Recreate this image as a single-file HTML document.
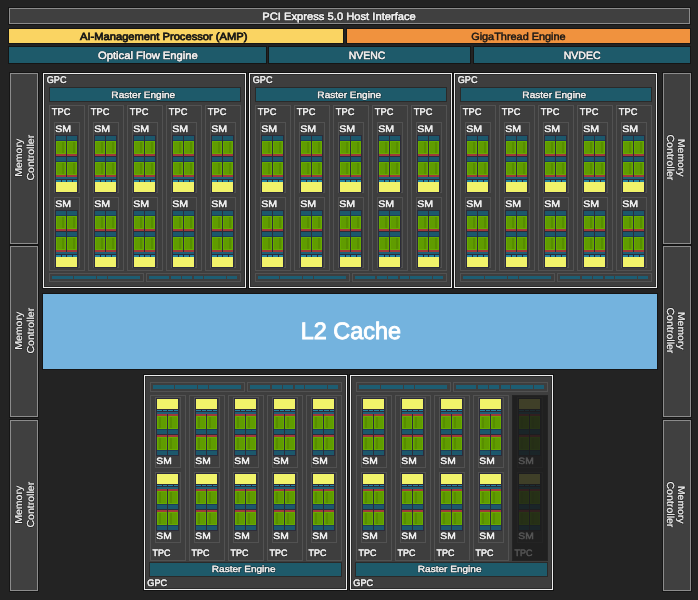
<!DOCTYPE html>
<html><head><meta charset="utf-8"><style>
html,body{margin:0;padding:0;}
body{width:698px;height:600px;background:#232323;position:relative;overflow:hidden;font-family:"Liberation Sans",sans-serif;}
body>div{position:absolute;}
svg{position:absolute;left:0;top:0;will-change:transform;}
text{font-family:"Liberation Sans",sans-serif;text-rendering:geometricPrecision;}
</style></head><body>
<div style="left:9px;top:8px;width:681px;height:16px;background:#404040;border:1px solid #8c8c8c;box-sizing:border-box;box-shadow:0 0 0 1px #151515;"></div>
<div style="left:9px;top:29px;width:334px;height:14px;background:#fad462;box-shadow:0 0 0 1px #151515;"></div>
<div style="left:347px;top:29px;width:343px;height:14px;background:#f0923e;box-shadow:0 0 0 1px #151515;"></div>
<div style="left:9px;top:47px;width:257px;height:16px;background:#1e5a6a;box-shadow:0 0 0 1px #151515;"></div>
<div style="left:269px;top:47px;width:201px;height:16px;background:#1e5a6a;box-shadow:0 0 0 1px #151515;"></div>
<div style="left:474px;top:47px;width:216px;height:16px;background:#1e5a6a;box-shadow:0 0 0 1px #151515;"></div>
<div style="left:10px;top:73px;width:28px;height:171px;background:#404040;border:1px solid #8c8c8c;box-sizing:border-box;box-shadow:0 0 0 1px #151515;"></div>
<div style="left:10px;top:246px;width:28px;height:171px;background:#404040;border:1px solid #8c8c8c;box-sizing:border-box;box-shadow:0 0 0 1px #151515;"></div>
<div style="left:10px;top:420px;width:28px;height:171px;background:#404040;border:1px solid #8c8c8c;box-sizing:border-box;box-shadow:0 0 0 1px #151515;"></div>
<div style="left:663px;top:73px;width:28px;height:171px;background:#404040;border:1px solid #8c8c8c;box-sizing:border-box;box-shadow:0 0 0 1px #151515;"></div>
<div style="left:663px;top:246px;width:28px;height:171px;background:#404040;border:1px solid #8c8c8c;box-sizing:border-box;box-shadow:0 0 0 1px #151515;"></div>
<div style="left:663px;top:420px;width:28px;height:171px;background:#404040;border:1px solid #8c8c8c;box-sizing:border-box;box-shadow:0 0 0 1px #151515;"></div>
<div style="left:43px;top:294px;width:614px;height:75px;background:#74b3de;box-shadow:0 0 0 1px #151515;"></div>
<div style="left:43px;top:73px;width:203px;height:215px;background:#3e3e3e;border:1px solid #ececec;box-sizing:border-box;box-shadow:0 0 0 1px #121212, inset 0 0 0 1px #2c2c2c;"></div>
<div style="left:50px;top:88px;width:190px;height:13px;background:#1e5a6a;box-shadow:0 0 0 1px #2a2a2a;"></div>
<div style="left:49px;top:105px;width:36px;height:166px;border:1px solid #525252;box-sizing:border-box;"></div>
<div style="left:54px;top:122px;width:26px;height:71px;border:1px solid #525252;box-sizing:border-box;"></div>
<div style="left:55px;top:135px;width:23px;height:58px;background:#2c2c3a;"></div>
<div style="left:56px;top:136px;width:10px;height:4px;background:#1c586c;"></div>
<div style="left:56px;top:140px;width:10px;height:1px;background:#1d3d5a;"></div>
<div style="left:56px;top:141px;width:10px;height:13px;background:#609c00;box-shadow:inset 0 0 0 1px #68aa00;"></div>
<div style="left:62px;top:142px;width:2px;height:11px;background:#588e00;"></div>
<div style="left:56px;top:154px;width:10px;height:2px;background:#a03a3a;"></div>
<div style="left:56px;top:157px;width:10px;height:4px;background:#1c586c;"></div>
<div style="left:56px;top:161px;width:10px;height:1px;background:#1d3d5a;"></div>
<div style="left:56px;top:162px;width:10px;height:13px;background:#609c00;box-shadow:inset 0 0 0 1px #68aa00;"></div>
<div style="left:62px;top:163px;width:2px;height:11px;background:#588e00;"></div>
<div style="left:56px;top:175px;width:10px;height:2px;background:#a03a3a;"></div>
<div style="left:67px;top:136px;width:10px;height:4px;background:#1c586c;"></div>
<div style="left:67px;top:140px;width:10px;height:1px;background:#1d3d5a;"></div>
<div style="left:67px;top:141px;width:10px;height:13px;background:#609c00;box-shadow:inset 0 0 0 1px #68aa00;"></div>
<div style="left:73px;top:142px;width:2px;height:11px;background:#588e00;"></div>
<div style="left:67px;top:154px;width:10px;height:2px;background:#a03a3a;"></div>
<div style="left:67px;top:157px;width:10px;height:4px;background:#1c586c;"></div>
<div style="left:67px;top:161px;width:10px;height:1px;background:#1d3d5a;"></div>
<div style="left:67px;top:162px;width:10px;height:13px;background:#609c00;box-shadow:inset 0 0 0 1px #68aa00;"></div>
<div style="left:73px;top:163px;width:2px;height:11px;background:#588e00;"></div>
<div style="left:67px;top:175px;width:10px;height:2px;background:#a03a3a;"></div>
<div style="left:56px;top:177px;width:21px;height:2px;background:#1f6076;"></div>
<div style="left:56px;top:180px;width:21px;height:1.5px;background:#2684a2;"></div>
<div style="left:61px;top:180px;width:1px;height:1.5px;background:#26263a;"></div>
<div style="left:66px;top:180px;width:1px;height:1.5px;background:#26263a;"></div>
<div style="left:72px;top:180px;width:1px;height:1.5px;background:#26263a;"></div>
<div style="left:56px;top:182px;width:21px;height:10px;background:#f1f36a;"></div>
<div style="left:54px;top:197px;width:26px;height:71px;border:1px solid #525252;box-sizing:border-box;"></div>
<div style="left:55px;top:210px;width:23px;height:58px;background:#2c2c3a;"></div>
<div style="left:56px;top:211px;width:10px;height:4px;background:#1c586c;"></div>
<div style="left:56px;top:215px;width:10px;height:1px;background:#1d3d5a;"></div>
<div style="left:56px;top:216px;width:10px;height:13px;background:#609c00;box-shadow:inset 0 0 0 1px #68aa00;"></div>
<div style="left:62px;top:217px;width:2px;height:11px;background:#588e00;"></div>
<div style="left:56px;top:229px;width:10px;height:2px;background:#a03a3a;"></div>
<div style="left:56px;top:232px;width:10px;height:4px;background:#1c586c;"></div>
<div style="left:56px;top:236px;width:10px;height:1px;background:#1d3d5a;"></div>
<div style="left:56px;top:237px;width:10px;height:13px;background:#609c00;box-shadow:inset 0 0 0 1px #68aa00;"></div>
<div style="left:62px;top:238px;width:2px;height:11px;background:#588e00;"></div>
<div style="left:56px;top:250px;width:10px;height:2px;background:#a03a3a;"></div>
<div style="left:67px;top:211px;width:10px;height:4px;background:#1c586c;"></div>
<div style="left:67px;top:215px;width:10px;height:1px;background:#1d3d5a;"></div>
<div style="left:67px;top:216px;width:10px;height:13px;background:#609c00;box-shadow:inset 0 0 0 1px #68aa00;"></div>
<div style="left:73px;top:217px;width:2px;height:11px;background:#588e00;"></div>
<div style="left:67px;top:229px;width:10px;height:2px;background:#a03a3a;"></div>
<div style="left:67px;top:232px;width:10px;height:4px;background:#1c586c;"></div>
<div style="left:67px;top:236px;width:10px;height:1px;background:#1d3d5a;"></div>
<div style="left:67px;top:237px;width:10px;height:13px;background:#609c00;box-shadow:inset 0 0 0 1px #68aa00;"></div>
<div style="left:73px;top:238px;width:2px;height:11px;background:#588e00;"></div>
<div style="left:67px;top:250px;width:10px;height:2px;background:#a03a3a;"></div>
<div style="left:56px;top:252px;width:21px;height:2px;background:#1f6076;"></div>
<div style="left:56px;top:255px;width:21px;height:1.5px;background:#2684a2;"></div>
<div style="left:61px;top:255px;width:1px;height:1.5px;background:#26263a;"></div>
<div style="left:66px;top:255px;width:1px;height:1.5px;background:#26263a;"></div>
<div style="left:72px;top:255px;width:1px;height:1.5px;background:#26263a;"></div>
<div style="left:56px;top:257px;width:21px;height:10px;background:#f1f36a;"></div>
<div style="left:88px;top:105px;width:36px;height:166px;border:1px solid #525252;box-sizing:border-box;"></div>
<div style="left:93px;top:122px;width:26px;height:71px;border:1px solid #525252;box-sizing:border-box;"></div>
<div style="left:94px;top:135px;width:23px;height:58px;background:#2c2c3a;"></div>
<div style="left:95px;top:136px;width:10px;height:4px;background:#1c586c;"></div>
<div style="left:95px;top:140px;width:10px;height:1px;background:#1d3d5a;"></div>
<div style="left:95px;top:141px;width:10px;height:13px;background:#609c00;box-shadow:inset 0 0 0 1px #68aa00;"></div>
<div style="left:101px;top:142px;width:2px;height:11px;background:#588e00;"></div>
<div style="left:95px;top:154px;width:10px;height:2px;background:#a03a3a;"></div>
<div style="left:95px;top:157px;width:10px;height:4px;background:#1c586c;"></div>
<div style="left:95px;top:161px;width:10px;height:1px;background:#1d3d5a;"></div>
<div style="left:95px;top:162px;width:10px;height:13px;background:#609c00;box-shadow:inset 0 0 0 1px #68aa00;"></div>
<div style="left:101px;top:163px;width:2px;height:11px;background:#588e00;"></div>
<div style="left:95px;top:175px;width:10px;height:2px;background:#a03a3a;"></div>
<div style="left:106px;top:136px;width:10px;height:4px;background:#1c586c;"></div>
<div style="left:106px;top:140px;width:10px;height:1px;background:#1d3d5a;"></div>
<div style="left:106px;top:141px;width:10px;height:13px;background:#609c00;box-shadow:inset 0 0 0 1px #68aa00;"></div>
<div style="left:112px;top:142px;width:2px;height:11px;background:#588e00;"></div>
<div style="left:106px;top:154px;width:10px;height:2px;background:#a03a3a;"></div>
<div style="left:106px;top:157px;width:10px;height:4px;background:#1c586c;"></div>
<div style="left:106px;top:161px;width:10px;height:1px;background:#1d3d5a;"></div>
<div style="left:106px;top:162px;width:10px;height:13px;background:#609c00;box-shadow:inset 0 0 0 1px #68aa00;"></div>
<div style="left:112px;top:163px;width:2px;height:11px;background:#588e00;"></div>
<div style="left:106px;top:175px;width:10px;height:2px;background:#a03a3a;"></div>
<div style="left:95px;top:177px;width:21px;height:2px;background:#1f6076;"></div>
<div style="left:95px;top:180px;width:21px;height:1.5px;background:#2684a2;"></div>
<div style="left:100px;top:180px;width:1px;height:1.5px;background:#26263a;"></div>
<div style="left:105px;top:180px;width:1px;height:1.5px;background:#26263a;"></div>
<div style="left:111px;top:180px;width:1px;height:1.5px;background:#26263a;"></div>
<div style="left:95px;top:182px;width:21px;height:10px;background:#f1f36a;"></div>
<div style="left:93px;top:197px;width:26px;height:71px;border:1px solid #525252;box-sizing:border-box;"></div>
<div style="left:94px;top:210px;width:23px;height:58px;background:#2c2c3a;"></div>
<div style="left:95px;top:211px;width:10px;height:4px;background:#1c586c;"></div>
<div style="left:95px;top:215px;width:10px;height:1px;background:#1d3d5a;"></div>
<div style="left:95px;top:216px;width:10px;height:13px;background:#609c00;box-shadow:inset 0 0 0 1px #68aa00;"></div>
<div style="left:101px;top:217px;width:2px;height:11px;background:#588e00;"></div>
<div style="left:95px;top:229px;width:10px;height:2px;background:#a03a3a;"></div>
<div style="left:95px;top:232px;width:10px;height:4px;background:#1c586c;"></div>
<div style="left:95px;top:236px;width:10px;height:1px;background:#1d3d5a;"></div>
<div style="left:95px;top:237px;width:10px;height:13px;background:#609c00;box-shadow:inset 0 0 0 1px #68aa00;"></div>
<div style="left:101px;top:238px;width:2px;height:11px;background:#588e00;"></div>
<div style="left:95px;top:250px;width:10px;height:2px;background:#a03a3a;"></div>
<div style="left:106px;top:211px;width:10px;height:4px;background:#1c586c;"></div>
<div style="left:106px;top:215px;width:10px;height:1px;background:#1d3d5a;"></div>
<div style="left:106px;top:216px;width:10px;height:13px;background:#609c00;box-shadow:inset 0 0 0 1px #68aa00;"></div>
<div style="left:112px;top:217px;width:2px;height:11px;background:#588e00;"></div>
<div style="left:106px;top:229px;width:10px;height:2px;background:#a03a3a;"></div>
<div style="left:106px;top:232px;width:10px;height:4px;background:#1c586c;"></div>
<div style="left:106px;top:236px;width:10px;height:1px;background:#1d3d5a;"></div>
<div style="left:106px;top:237px;width:10px;height:13px;background:#609c00;box-shadow:inset 0 0 0 1px #68aa00;"></div>
<div style="left:112px;top:238px;width:2px;height:11px;background:#588e00;"></div>
<div style="left:106px;top:250px;width:10px;height:2px;background:#a03a3a;"></div>
<div style="left:95px;top:252px;width:21px;height:2px;background:#1f6076;"></div>
<div style="left:95px;top:255px;width:21px;height:1.5px;background:#2684a2;"></div>
<div style="left:100px;top:255px;width:1px;height:1.5px;background:#26263a;"></div>
<div style="left:105px;top:255px;width:1px;height:1.5px;background:#26263a;"></div>
<div style="left:111px;top:255px;width:1px;height:1.5px;background:#26263a;"></div>
<div style="left:95px;top:257px;width:21px;height:10px;background:#f1f36a;"></div>
<div style="left:127px;top:105px;width:36px;height:166px;border:1px solid #525252;box-sizing:border-box;"></div>
<div style="left:132px;top:122px;width:26px;height:71px;border:1px solid #525252;box-sizing:border-box;"></div>
<div style="left:133px;top:135px;width:23px;height:58px;background:#2c2c3a;"></div>
<div style="left:134px;top:136px;width:10px;height:4px;background:#1c586c;"></div>
<div style="left:134px;top:140px;width:10px;height:1px;background:#1d3d5a;"></div>
<div style="left:134px;top:141px;width:10px;height:13px;background:#609c00;box-shadow:inset 0 0 0 1px #68aa00;"></div>
<div style="left:140px;top:142px;width:2px;height:11px;background:#588e00;"></div>
<div style="left:134px;top:154px;width:10px;height:2px;background:#a03a3a;"></div>
<div style="left:134px;top:157px;width:10px;height:4px;background:#1c586c;"></div>
<div style="left:134px;top:161px;width:10px;height:1px;background:#1d3d5a;"></div>
<div style="left:134px;top:162px;width:10px;height:13px;background:#609c00;box-shadow:inset 0 0 0 1px #68aa00;"></div>
<div style="left:140px;top:163px;width:2px;height:11px;background:#588e00;"></div>
<div style="left:134px;top:175px;width:10px;height:2px;background:#a03a3a;"></div>
<div style="left:145px;top:136px;width:10px;height:4px;background:#1c586c;"></div>
<div style="left:145px;top:140px;width:10px;height:1px;background:#1d3d5a;"></div>
<div style="left:145px;top:141px;width:10px;height:13px;background:#609c00;box-shadow:inset 0 0 0 1px #68aa00;"></div>
<div style="left:151px;top:142px;width:2px;height:11px;background:#588e00;"></div>
<div style="left:145px;top:154px;width:10px;height:2px;background:#a03a3a;"></div>
<div style="left:145px;top:157px;width:10px;height:4px;background:#1c586c;"></div>
<div style="left:145px;top:161px;width:10px;height:1px;background:#1d3d5a;"></div>
<div style="left:145px;top:162px;width:10px;height:13px;background:#609c00;box-shadow:inset 0 0 0 1px #68aa00;"></div>
<div style="left:151px;top:163px;width:2px;height:11px;background:#588e00;"></div>
<div style="left:145px;top:175px;width:10px;height:2px;background:#a03a3a;"></div>
<div style="left:134px;top:177px;width:21px;height:2px;background:#1f6076;"></div>
<div style="left:134px;top:180px;width:21px;height:1.5px;background:#2684a2;"></div>
<div style="left:139px;top:180px;width:1px;height:1.5px;background:#26263a;"></div>
<div style="left:144px;top:180px;width:1px;height:1.5px;background:#26263a;"></div>
<div style="left:150px;top:180px;width:1px;height:1.5px;background:#26263a;"></div>
<div style="left:134px;top:182px;width:21px;height:10px;background:#f1f36a;"></div>
<div style="left:132px;top:197px;width:26px;height:71px;border:1px solid #525252;box-sizing:border-box;"></div>
<div style="left:133px;top:210px;width:23px;height:58px;background:#2c2c3a;"></div>
<div style="left:134px;top:211px;width:10px;height:4px;background:#1c586c;"></div>
<div style="left:134px;top:215px;width:10px;height:1px;background:#1d3d5a;"></div>
<div style="left:134px;top:216px;width:10px;height:13px;background:#609c00;box-shadow:inset 0 0 0 1px #68aa00;"></div>
<div style="left:140px;top:217px;width:2px;height:11px;background:#588e00;"></div>
<div style="left:134px;top:229px;width:10px;height:2px;background:#a03a3a;"></div>
<div style="left:134px;top:232px;width:10px;height:4px;background:#1c586c;"></div>
<div style="left:134px;top:236px;width:10px;height:1px;background:#1d3d5a;"></div>
<div style="left:134px;top:237px;width:10px;height:13px;background:#609c00;box-shadow:inset 0 0 0 1px #68aa00;"></div>
<div style="left:140px;top:238px;width:2px;height:11px;background:#588e00;"></div>
<div style="left:134px;top:250px;width:10px;height:2px;background:#a03a3a;"></div>
<div style="left:145px;top:211px;width:10px;height:4px;background:#1c586c;"></div>
<div style="left:145px;top:215px;width:10px;height:1px;background:#1d3d5a;"></div>
<div style="left:145px;top:216px;width:10px;height:13px;background:#609c00;box-shadow:inset 0 0 0 1px #68aa00;"></div>
<div style="left:151px;top:217px;width:2px;height:11px;background:#588e00;"></div>
<div style="left:145px;top:229px;width:10px;height:2px;background:#a03a3a;"></div>
<div style="left:145px;top:232px;width:10px;height:4px;background:#1c586c;"></div>
<div style="left:145px;top:236px;width:10px;height:1px;background:#1d3d5a;"></div>
<div style="left:145px;top:237px;width:10px;height:13px;background:#609c00;box-shadow:inset 0 0 0 1px #68aa00;"></div>
<div style="left:151px;top:238px;width:2px;height:11px;background:#588e00;"></div>
<div style="left:145px;top:250px;width:10px;height:2px;background:#a03a3a;"></div>
<div style="left:134px;top:252px;width:21px;height:2px;background:#1f6076;"></div>
<div style="left:134px;top:255px;width:21px;height:1.5px;background:#2684a2;"></div>
<div style="left:139px;top:255px;width:1px;height:1.5px;background:#26263a;"></div>
<div style="left:144px;top:255px;width:1px;height:1.5px;background:#26263a;"></div>
<div style="left:150px;top:255px;width:1px;height:1.5px;background:#26263a;"></div>
<div style="left:134px;top:257px;width:21px;height:10px;background:#f1f36a;"></div>
<div style="left:166px;top:105px;width:36px;height:166px;border:1px solid #525252;box-sizing:border-box;"></div>
<div style="left:171px;top:122px;width:26px;height:71px;border:1px solid #525252;box-sizing:border-box;"></div>
<div style="left:172px;top:135px;width:23px;height:58px;background:#2c2c3a;"></div>
<div style="left:173px;top:136px;width:10px;height:4px;background:#1c586c;"></div>
<div style="left:173px;top:140px;width:10px;height:1px;background:#1d3d5a;"></div>
<div style="left:173px;top:141px;width:10px;height:13px;background:#609c00;box-shadow:inset 0 0 0 1px #68aa00;"></div>
<div style="left:179px;top:142px;width:2px;height:11px;background:#588e00;"></div>
<div style="left:173px;top:154px;width:10px;height:2px;background:#a03a3a;"></div>
<div style="left:173px;top:157px;width:10px;height:4px;background:#1c586c;"></div>
<div style="left:173px;top:161px;width:10px;height:1px;background:#1d3d5a;"></div>
<div style="left:173px;top:162px;width:10px;height:13px;background:#609c00;box-shadow:inset 0 0 0 1px #68aa00;"></div>
<div style="left:179px;top:163px;width:2px;height:11px;background:#588e00;"></div>
<div style="left:173px;top:175px;width:10px;height:2px;background:#a03a3a;"></div>
<div style="left:184px;top:136px;width:10px;height:4px;background:#1c586c;"></div>
<div style="left:184px;top:140px;width:10px;height:1px;background:#1d3d5a;"></div>
<div style="left:184px;top:141px;width:10px;height:13px;background:#609c00;box-shadow:inset 0 0 0 1px #68aa00;"></div>
<div style="left:190px;top:142px;width:2px;height:11px;background:#588e00;"></div>
<div style="left:184px;top:154px;width:10px;height:2px;background:#a03a3a;"></div>
<div style="left:184px;top:157px;width:10px;height:4px;background:#1c586c;"></div>
<div style="left:184px;top:161px;width:10px;height:1px;background:#1d3d5a;"></div>
<div style="left:184px;top:162px;width:10px;height:13px;background:#609c00;box-shadow:inset 0 0 0 1px #68aa00;"></div>
<div style="left:190px;top:163px;width:2px;height:11px;background:#588e00;"></div>
<div style="left:184px;top:175px;width:10px;height:2px;background:#a03a3a;"></div>
<div style="left:173px;top:177px;width:21px;height:2px;background:#1f6076;"></div>
<div style="left:173px;top:180px;width:21px;height:1.5px;background:#2684a2;"></div>
<div style="left:178px;top:180px;width:1px;height:1.5px;background:#26263a;"></div>
<div style="left:183px;top:180px;width:1px;height:1.5px;background:#26263a;"></div>
<div style="left:189px;top:180px;width:1px;height:1.5px;background:#26263a;"></div>
<div style="left:173px;top:182px;width:21px;height:10px;background:#f1f36a;"></div>
<div style="left:171px;top:197px;width:26px;height:71px;border:1px solid #525252;box-sizing:border-box;"></div>
<div style="left:172px;top:210px;width:23px;height:58px;background:#2c2c3a;"></div>
<div style="left:173px;top:211px;width:10px;height:4px;background:#1c586c;"></div>
<div style="left:173px;top:215px;width:10px;height:1px;background:#1d3d5a;"></div>
<div style="left:173px;top:216px;width:10px;height:13px;background:#609c00;box-shadow:inset 0 0 0 1px #68aa00;"></div>
<div style="left:179px;top:217px;width:2px;height:11px;background:#588e00;"></div>
<div style="left:173px;top:229px;width:10px;height:2px;background:#a03a3a;"></div>
<div style="left:173px;top:232px;width:10px;height:4px;background:#1c586c;"></div>
<div style="left:173px;top:236px;width:10px;height:1px;background:#1d3d5a;"></div>
<div style="left:173px;top:237px;width:10px;height:13px;background:#609c00;box-shadow:inset 0 0 0 1px #68aa00;"></div>
<div style="left:179px;top:238px;width:2px;height:11px;background:#588e00;"></div>
<div style="left:173px;top:250px;width:10px;height:2px;background:#a03a3a;"></div>
<div style="left:184px;top:211px;width:10px;height:4px;background:#1c586c;"></div>
<div style="left:184px;top:215px;width:10px;height:1px;background:#1d3d5a;"></div>
<div style="left:184px;top:216px;width:10px;height:13px;background:#609c00;box-shadow:inset 0 0 0 1px #68aa00;"></div>
<div style="left:190px;top:217px;width:2px;height:11px;background:#588e00;"></div>
<div style="left:184px;top:229px;width:10px;height:2px;background:#a03a3a;"></div>
<div style="left:184px;top:232px;width:10px;height:4px;background:#1c586c;"></div>
<div style="left:184px;top:236px;width:10px;height:1px;background:#1d3d5a;"></div>
<div style="left:184px;top:237px;width:10px;height:13px;background:#609c00;box-shadow:inset 0 0 0 1px #68aa00;"></div>
<div style="left:190px;top:238px;width:2px;height:11px;background:#588e00;"></div>
<div style="left:184px;top:250px;width:10px;height:2px;background:#a03a3a;"></div>
<div style="left:173px;top:252px;width:21px;height:2px;background:#1f6076;"></div>
<div style="left:173px;top:255px;width:21px;height:1.5px;background:#2684a2;"></div>
<div style="left:178px;top:255px;width:1px;height:1.5px;background:#26263a;"></div>
<div style="left:183px;top:255px;width:1px;height:1.5px;background:#26263a;"></div>
<div style="left:189px;top:255px;width:1px;height:1.5px;background:#26263a;"></div>
<div style="left:173px;top:257px;width:21px;height:10px;background:#f1f36a;"></div>
<div style="left:205px;top:105px;width:36px;height:166px;border:1px solid #525252;box-sizing:border-box;"></div>
<div style="left:210px;top:122px;width:26px;height:71px;border:1px solid #525252;box-sizing:border-box;"></div>
<div style="left:211px;top:135px;width:23px;height:58px;background:#2c2c3a;"></div>
<div style="left:212px;top:136px;width:10px;height:4px;background:#1c586c;"></div>
<div style="left:212px;top:140px;width:10px;height:1px;background:#1d3d5a;"></div>
<div style="left:212px;top:141px;width:10px;height:13px;background:#609c00;box-shadow:inset 0 0 0 1px #68aa00;"></div>
<div style="left:218px;top:142px;width:2px;height:11px;background:#588e00;"></div>
<div style="left:212px;top:154px;width:10px;height:2px;background:#a03a3a;"></div>
<div style="left:212px;top:157px;width:10px;height:4px;background:#1c586c;"></div>
<div style="left:212px;top:161px;width:10px;height:1px;background:#1d3d5a;"></div>
<div style="left:212px;top:162px;width:10px;height:13px;background:#609c00;box-shadow:inset 0 0 0 1px #68aa00;"></div>
<div style="left:218px;top:163px;width:2px;height:11px;background:#588e00;"></div>
<div style="left:212px;top:175px;width:10px;height:2px;background:#a03a3a;"></div>
<div style="left:223px;top:136px;width:10px;height:4px;background:#1c586c;"></div>
<div style="left:223px;top:140px;width:10px;height:1px;background:#1d3d5a;"></div>
<div style="left:223px;top:141px;width:10px;height:13px;background:#609c00;box-shadow:inset 0 0 0 1px #68aa00;"></div>
<div style="left:229px;top:142px;width:2px;height:11px;background:#588e00;"></div>
<div style="left:223px;top:154px;width:10px;height:2px;background:#a03a3a;"></div>
<div style="left:223px;top:157px;width:10px;height:4px;background:#1c586c;"></div>
<div style="left:223px;top:161px;width:10px;height:1px;background:#1d3d5a;"></div>
<div style="left:223px;top:162px;width:10px;height:13px;background:#609c00;box-shadow:inset 0 0 0 1px #68aa00;"></div>
<div style="left:229px;top:163px;width:2px;height:11px;background:#588e00;"></div>
<div style="left:223px;top:175px;width:10px;height:2px;background:#a03a3a;"></div>
<div style="left:212px;top:177px;width:21px;height:2px;background:#1f6076;"></div>
<div style="left:212px;top:180px;width:21px;height:1.5px;background:#2684a2;"></div>
<div style="left:217px;top:180px;width:1px;height:1.5px;background:#26263a;"></div>
<div style="left:222px;top:180px;width:1px;height:1.5px;background:#26263a;"></div>
<div style="left:228px;top:180px;width:1px;height:1.5px;background:#26263a;"></div>
<div style="left:212px;top:182px;width:21px;height:10px;background:#f1f36a;"></div>
<div style="left:210px;top:197px;width:26px;height:71px;border:1px solid #525252;box-sizing:border-box;"></div>
<div style="left:211px;top:210px;width:23px;height:58px;background:#2c2c3a;"></div>
<div style="left:212px;top:211px;width:10px;height:4px;background:#1c586c;"></div>
<div style="left:212px;top:215px;width:10px;height:1px;background:#1d3d5a;"></div>
<div style="left:212px;top:216px;width:10px;height:13px;background:#609c00;box-shadow:inset 0 0 0 1px #68aa00;"></div>
<div style="left:218px;top:217px;width:2px;height:11px;background:#588e00;"></div>
<div style="left:212px;top:229px;width:10px;height:2px;background:#a03a3a;"></div>
<div style="left:212px;top:232px;width:10px;height:4px;background:#1c586c;"></div>
<div style="left:212px;top:236px;width:10px;height:1px;background:#1d3d5a;"></div>
<div style="left:212px;top:237px;width:10px;height:13px;background:#609c00;box-shadow:inset 0 0 0 1px #68aa00;"></div>
<div style="left:218px;top:238px;width:2px;height:11px;background:#588e00;"></div>
<div style="left:212px;top:250px;width:10px;height:2px;background:#a03a3a;"></div>
<div style="left:223px;top:211px;width:10px;height:4px;background:#1c586c;"></div>
<div style="left:223px;top:215px;width:10px;height:1px;background:#1d3d5a;"></div>
<div style="left:223px;top:216px;width:10px;height:13px;background:#609c00;box-shadow:inset 0 0 0 1px #68aa00;"></div>
<div style="left:229px;top:217px;width:2px;height:11px;background:#588e00;"></div>
<div style="left:223px;top:229px;width:10px;height:2px;background:#a03a3a;"></div>
<div style="left:223px;top:232px;width:10px;height:4px;background:#1c586c;"></div>
<div style="left:223px;top:236px;width:10px;height:1px;background:#1d3d5a;"></div>
<div style="left:223px;top:237px;width:10px;height:13px;background:#609c00;box-shadow:inset 0 0 0 1px #68aa00;"></div>
<div style="left:229px;top:238px;width:2px;height:11px;background:#588e00;"></div>
<div style="left:223px;top:250px;width:10px;height:2px;background:#a03a3a;"></div>
<div style="left:212px;top:252px;width:21px;height:2px;background:#1f6076;"></div>
<div style="left:212px;top:255px;width:21px;height:1.5px;background:#2684a2;"></div>
<div style="left:217px;top:255px;width:1px;height:1.5px;background:#26263a;"></div>
<div style="left:222px;top:255px;width:1px;height:1.5px;background:#26263a;"></div>
<div style="left:228px;top:255px;width:1px;height:1.5px;background:#26263a;"></div>
<div style="left:212px;top:257px;width:21px;height:10px;background:#f1f36a;"></div>
<div style="left:49px;top:273px;width:95px;height:9px;border:1px solid #525252;box-sizing:border-box;"></div>
<div style="left:146px;top:273px;width:95px;height:9px;border:1px solid #525252;box-sizing:border-box;"></div>
<div style="left:52px;top:276px;width:21px;height:3px;background:#1d5d72;"></div>
<div style="left:74px;top:276px;width:22px;height:3px;background:#1d5d72;"></div>
<div style="left:97px;top:276px;width:10px;height:3px;background:#1d5d72;"></div>
<div style="left:108px;top:276px;width:32px;height:3px;background:#1d5d72;"></div>
<div style="left:149px;top:276px;width:20px;height:3px;background:#1d5d72;"></div>
<div style="left:171px;top:276px;width:10px;height:3px;background:#1d5d72;"></div>
<div style="left:182px;top:276px;width:10px;height:3px;background:#1d5d72;"></div>
<div style="left:194px;top:276px;width:9px;height:3px;background:#1d5d72;"></div>
<div style="left:204px;top:276px;width:22px;height:3px;background:#1d5d72;"></div>
<div style="left:227px;top:276px;width:10px;height:3px;background:#1d5d72;"></div>
<div style="left:249px;top:73px;width:203px;height:215px;background:#3e3e3e;border:1px solid #ececec;box-sizing:border-box;box-shadow:0 0 0 1px #121212, inset 0 0 0 1px #2c2c2c;"></div>
<div style="left:256px;top:88px;width:190px;height:13px;background:#1e5a6a;box-shadow:0 0 0 1px #2a2a2a;"></div>
<div style="left:255px;top:105px;width:36px;height:166px;border:1px solid #525252;box-sizing:border-box;"></div>
<div style="left:260px;top:122px;width:26px;height:71px;border:1px solid #525252;box-sizing:border-box;"></div>
<div style="left:261px;top:135px;width:23px;height:58px;background:#2c2c3a;"></div>
<div style="left:262px;top:136px;width:10px;height:4px;background:#1c586c;"></div>
<div style="left:262px;top:140px;width:10px;height:1px;background:#1d3d5a;"></div>
<div style="left:262px;top:141px;width:10px;height:13px;background:#609c00;box-shadow:inset 0 0 0 1px #68aa00;"></div>
<div style="left:268px;top:142px;width:2px;height:11px;background:#588e00;"></div>
<div style="left:262px;top:154px;width:10px;height:2px;background:#a03a3a;"></div>
<div style="left:262px;top:157px;width:10px;height:4px;background:#1c586c;"></div>
<div style="left:262px;top:161px;width:10px;height:1px;background:#1d3d5a;"></div>
<div style="left:262px;top:162px;width:10px;height:13px;background:#609c00;box-shadow:inset 0 0 0 1px #68aa00;"></div>
<div style="left:268px;top:163px;width:2px;height:11px;background:#588e00;"></div>
<div style="left:262px;top:175px;width:10px;height:2px;background:#a03a3a;"></div>
<div style="left:273px;top:136px;width:10px;height:4px;background:#1c586c;"></div>
<div style="left:273px;top:140px;width:10px;height:1px;background:#1d3d5a;"></div>
<div style="left:273px;top:141px;width:10px;height:13px;background:#609c00;box-shadow:inset 0 0 0 1px #68aa00;"></div>
<div style="left:279px;top:142px;width:2px;height:11px;background:#588e00;"></div>
<div style="left:273px;top:154px;width:10px;height:2px;background:#a03a3a;"></div>
<div style="left:273px;top:157px;width:10px;height:4px;background:#1c586c;"></div>
<div style="left:273px;top:161px;width:10px;height:1px;background:#1d3d5a;"></div>
<div style="left:273px;top:162px;width:10px;height:13px;background:#609c00;box-shadow:inset 0 0 0 1px #68aa00;"></div>
<div style="left:279px;top:163px;width:2px;height:11px;background:#588e00;"></div>
<div style="left:273px;top:175px;width:10px;height:2px;background:#a03a3a;"></div>
<div style="left:262px;top:177px;width:21px;height:2px;background:#1f6076;"></div>
<div style="left:262px;top:180px;width:21px;height:1.5px;background:#2684a2;"></div>
<div style="left:267px;top:180px;width:1px;height:1.5px;background:#26263a;"></div>
<div style="left:272px;top:180px;width:1px;height:1.5px;background:#26263a;"></div>
<div style="left:278px;top:180px;width:1px;height:1.5px;background:#26263a;"></div>
<div style="left:262px;top:182px;width:21px;height:10px;background:#f1f36a;"></div>
<div style="left:260px;top:197px;width:26px;height:71px;border:1px solid #525252;box-sizing:border-box;"></div>
<div style="left:261px;top:210px;width:23px;height:58px;background:#2c2c3a;"></div>
<div style="left:262px;top:211px;width:10px;height:4px;background:#1c586c;"></div>
<div style="left:262px;top:215px;width:10px;height:1px;background:#1d3d5a;"></div>
<div style="left:262px;top:216px;width:10px;height:13px;background:#609c00;box-shadow:inset 0 0 0 1px #68aa00;"></div>
<div style="left:268px;top:217px;width:2px;height:11px;background:#588e00;"></div>
<div style="left:262px;top:229px;width:10px;height:2px;background:#a03a3a;"></div>
<div style="left:262px;top:232px;width:10px;height:4px;background:#1c586c;"></div>
<div style="left:262px;top:236px;width:10px;height:1px;background:#1d3d5a;"></div>
<div style="left:262px;top:237px;width:10px;height:13px;background:#609c00;box-shadow:inset 0 0 0 1px #68aa00;"></div>
<div style="left:268px;top:238px;width:2px;height:11px;background:#588e00;"></div>
<div style="left:262px;top:250px;width:10px;height:2px;background:#a03a3a;"></div>
<div style="left:273px;top:211px;width:10px;height:4px;background:#1c586c;"></div>
<div style="left:273px;top:215px;width:10px;height:1px;background:#1d3d5a;"></div>
<div style="left:273px;top:216px;width:10px;height:13px;background:#609c00;box-shadow:inset 0 0 0 1px #68aa00;"></div>
<div style="left:279px;top:217px;width:2px;height:11px;background:#588e00;"></div>
<div style="left:273px;top:229px;width:10px;height:2px;background:#a03a3a;"></div>
<div style="left:273px;top:232px;width:10px;height:4px;background:#1c586c;"></div>
<div style="left:273px;top:236px;width:10px;height:1px;background:#1d3d5a;"></div>
<div style="left:273px;top:237px;width:10px;height:13px;background:#609c00;box-shadow:inset 0 0 0 1px #68aa00;"></div>
<div style="left:279px;top:238px;width:2px;height:11px;background:#588e00;"></div>
<div style="left:273px;top:250px;width:10px;height:2px;background:#a03a3a;"></div>
<div style="left:262px;top:252px;width:21px;height:2px;background:#1f6076;"></div>
<div style="left:262px;top:255px;width:21px;height:1.5px;background:#2684a2;"></div>
<div style="left:267px;top:255px;width:1px;height:1.5px;background:#26263a;"></div>
<div style="left:272px;top:255px;width:1px;height:1.5px;background:#26263a;"></div>
<div style="left:278px;top:255px;width:1px;height:1.5px;background:#26263a;"></div>
<div style="left:262px;top:257px;width:21px;height:10px;background:#f1f36a;"></div>
<div style="left:294px;top:105px;width:36px;height:166px;border:1px solid #525252;box-sizing:border-box;"></div>
<div style="left:299px;top:122px;width:26px;height:71px;border:1px solid #525252;box-sizing:border-box;"></div>
<div style="left:300px;top:135px;width:23px;height:58px;background:#2c2c3a;"></div>
<div style="left:301px;top:136px;width:10px;height:4px;background:#1c586c;"></div>
<div style="left:301px;top:140px;width:10px;height:1px;background:#1d3d5a;"></div>
<div style="left:301px;top:141px;width:10px;height:13px;background:#609c00;box-shadow:inset 0 0 0 1px #68aa00;"></div>
<div style="left:307px;top:142px;width:2px;height:11px;background:#588e00;"></div>
<div style="left:301px;top:154px;width:10px;height:2px;background:#a03a3a;"></div>
<div style="left:301px;top:157px;width:10px;height:4px;background:#1c586c;"></div>
<div style="left:301px;top:161px;width:10px;height:1px;background:#1d3d5a;"></div>
<div style="left:301px;top:162px;width:10px;height:13px;background:#609c00;box-shadow:inset 0 0 0 1px #68aa00;"></div>
<div style="left:307px;top:163px;width:2px;height:11px;background:#588e00;"></div>
<div style="left:301px;top:175px;width:10px;height:2px;background:#a03a3a;"></div>
<div style="left:312px;top:136px;width:10px;height:4px;background:#1c586c;"></div>
<div style="left:312px;top:140px;width:10px;height:1px;background:#1d3d5a;"></div>
<div style="left:312px;top:141px;width:10px;height:13px;background:#609c00;box-shadow:inset 0 0 0 1px #68aa00;"></div>
<div style="left:318px;top:142px;width:2px;height:11px;background:#588e00;"></div>
<div style="left:312px;top:154px;width:10px;height:2px;background:#a03a3a;"></div>
<div style="left:312px;top:157px;width:10px;height:4px;background:#1c586c;"></div>
<div style="left:312px;top:161px;width:10px;height:1px;background:#1d3d5a;"></div>
<div style="left:312px;top:162px;width:10px;height:13px;background:#609c00;box-shadow:inset 0 0 0 1px #68aa00;"></div>
<div style="left:318px;top:163px;width:2px;height:11px;background:#588e00;"></div>
<div style="left:312px;top:175px;width:10px;height:2px;background:#a03a3a;"></div>
<div style="left:301px;top:177px;width:21px;height:2px;background:#1f6076;"></div>
<div style="left:301px;top:180px;width:21px;height:1.5px;background:#2684a2;"></div>
<div style="left:306px;top:180px;width:1px;height:1.5px;background:#26263a;"></div>
<div style="left:311px;top:180px;width:1px;height:1.5px;background:#26263a;"></div>
<div style="left:317px;top:180px;width:1px;height:1.5px;background:#26263a;"></div>
<div style="left:301px;top:182px;width:21px;height:10px;background:#f1f36a;"></div>
<div style="left:299px;top:197px;width:26px;height:71px;border:1px solid #525252;box-sizing:border-box;"></div>
<div style="left:300px;top:210px;width:23px;height:58px;background:#2c2c3a;"></div>
<div style="left:301px;top:211px;width:10px;height:4px;background:#1c586c;"></div>
<div style="left:301px;top:215px;width:10px;height:1px;background:#1d3d5a;"></div>
<div style="left:301px;top:216px;width:10px;height:13px;background:#609c00;box-shadow:inset 0 0 0 1px #68aa00;"></div>
<div style="left:307px;top:217px;width:2px;height:11px;background:#588e00;"></div>
<div style="left:301px;top:229px;width:10px;height:2px;background:#a03a3a;"></div>
<div style="left:301px;top:232px;width:10px;height:4px;background:#1c586c;"></div>
<div style="left:301px;top:236px;width:10px;height:1px;background:#1d3d5a;"></div>
<div style="left:301px;top:237px;width:10px;height:13px;background:#609c00;box-shadow:inset 0 0 0 1px #68aa00;"></div>
<div style="left:307px;top:238px;width:2px;height:11px;background:#588e00;"></div>
<div style="left:301px;top:250px;width:10px;height:2px;background:#a03a3a;"></div>
<div style="left:312px;top:211px;width:10px;height:4px;background:#1c586c;"></div>
<div style="left:312px;top:215px;width:10px;height:1px;background:#1d3d5a;"></div>
<div style="left:312px;top:216px;width:10px;height:13px;background:#609c00;box-shadow:inset 0 0 0 1px #68aa00;"></div>
<div style="left:318px;top:217px;width:2px;height:11px;background:#588e00;"></div>
<div style="left:312px;top:229px;width:10px;height:2px;background:#a03a3a;"></div>
<div style="left:312px;top:232px;width:10px;height:4px;background:#1c586c;"></div>
<div style="left:312px;top:236px;width:10px;height:1px;background:#1d3d5a;"></div>
<div style="left:312px;top:237px;width:10px;height:13px;background:#609c00;box-shadow:inset 0 0 0 1px #68aa00;"></div>
<div style="left:318px;top:238px;width:2px;height:11px;background:#588e00;"></div>
<div style="left:312px;top:250px;width:10px;height:2px;background:#a03a3a;"></div>
<div style="left:301px;top:252px;width:21px;height:2px;background:#1f6076;"></div>
<div style="left:301px;top:255px;width:21px;height:1.5px;background:#2684a2;"></div>
<div style="left:306px;top:255px;width:1px;height:1.5px;background:#26263a;"></div>
<div style="left:311px;top:255px;width:1px;height:1.5px;background:#26263a;"></div>
<div style="left:317px;top:255px;width:1px;height:1.5px;background:#26263a;"></div>
<div style="left:301px;top:257px;width:21px;height:10px;background:#f1f36a;"></div>
<div style="left:333px;top:105px;width:36px;height:166px;border:1px solid #525252;box-sizing:border-box;"></div>
<div style="left:338px;top:122px;width:26px;height:71px;border:1px solid #525252;box-sizing:border-box;"></div>
<div style="left:339px;top:135px;width:23px;height:58px;background:#2c2c3a;"></div>
<div style="left:340px;top:136px;width:10px;height:4px;background:#1c586c;"></div>
<div style="left:340px;top:140px;width:10px;height:1px;background:#1d3d5a;"></div>
<div style="left:340px;top:141px;width:10px;height:13px;background:#609c00;box-shadow:inset 0 0 0 1px #68aa00;"></div>
<div style="left:346px;top:142px;width:2px;height:11px;background:#588e00;"></div>
<div style="left:340px;top:154px;width:10px;height:2px;background:#a03a3a;"></div>
<div style="left:340px;top:157px;width:10px;height:4px;background:#1c586c;"></div>
<div style="left:340px;top:161px;width:10px;height:1px;background:#1d3d5a;"></div>
<div style="left:340px;top:162px;width:10px;height:13px;background:#609c00;box-shadow:inset 0 0 0 1px #68aa00;"></div>
<div style="left:346px;top:163px;width:2px;height:11px;background:#588e00;"></div>
<div style="left:340px;top:175px;width:10px;height:2px;background:#a03a3a;"></div>
<div style="left:351px;top:136px;width:10px;height:4px;background:#1c586c;"></div>
<div style="left:351px;top:140px;width:10px;height:1px;background:#1d3d5a;"></div>
<div style="left:351px;top:141px;width:10px;height:13px;background:#609c00;box-shadow:inset 0 0 0 1px #68aa00;"></div>
<div style="left:357px;top:142px;width:2px;height:11px;background:#588e00;"></div>
<div style="left:351px;top:154px;width:10px;height:2px;background:#a03a3a;"></div>
<div style="left:351px;top:157px;width:10px;height:4px;background:#1c586c;"></div>
<div style="left:351px;top:161px;width:10px;height:1px;background:#1d3d5a;"></div>
<div style="left:351px;top:162px;width:10px;height:13px;background:#609c00;box-shadow:inset 0 0 0 1px #68aa00;"></div>
<div style="left:357px;top:163px;width:2px;height:11px;background:#588e00;"></div>
<div style="left:351px;top:175px;width:10px;height:2px;background:#a03a3a;"></div>
<div style="left:340px;top:177px;width:21px;height:2px;background:#1f6076;"></div>
<div style="left:340px;top:180px;width:21px;height:1.5px;background:#2684a2;"></div>
<div style="left:345px;top:180px;width:1px;height:1.5px;background:#26263a;"></div>
<div style="left:350px;top:180px;width:1px;height:1.5px;background:#26263a;"></div>
<div style="left:356px;top:180px;width:1px;height:1.5px;background:#26263a;"></div>
<div style="left:340px;top:182px;width:21px;height:10px;background:#f1f36a;"></div>
<div style="left:338px;top:197px;width:26px;height:71px;border:1px solid #525252;box-sizing:border-box;"></div>
<div style="left:339px;top:210px;width:23px;height:58px;background:#2c2c3a;"></div>
<div style="left:340px;top:211px;width:10px;height:4px;background:#1c586c;"></div>
<div style="left:340px;top:215px;width:10px;height:1px;background:#1d3d5a;"></div>
<div style="left:340px;top:216px;width:10px;height:13px;background:#609c00;box-shadow:inset 0 0 0 1px #68aa00;"></div>
<div style="left:346px;top:217px;width:2px;height:11px;background:#588e00;"></div>
<div style="left:340px;top:229px;width:10px;height:2px;background:#a03a3a;"></div>
<div style="left:340px;top:232px;width:10px;height:4px;background:#1c586c;"></div>
<div style="left:340px;top:236px;width:10px;height:1px;background:#1d3d5a;"></div>
<div style="left:340px;top:237px;width:10px;height:13px;background:#609c00;box-shadow:inset 0 0 0 1px #68aa00;"></div>
<div style="left:346px;top:238px;width:2px;height:11px;background:#588e00;"></div>
<div style="left:340px;top:250px;width:10px;height:2px;background:#a03a3a;"></div>
<div style="left:351px;top:211px;width:10px;height:4px;background:#1c586c;"></div>
<div style="left:351px;top:215px;width:10px;height:1px;background:#1d3d5a;"></div>
<div style="left:351px;top:216px;width:10px;height:13px;background:#609c00;box-shadow:inset 0 0 0 1px #68aa00;"></div>
<div style="left:357px;top:217px;width:2px;height:11px;background:#588e00;"></div>
<div style="left:351px;top:229px;width:10px;height:2px;background:#a03a3a;"></div>
<div style="left:351px;top:232px;width:10px;height:4px;background:#1c586c;"></div>
<div style="left:351px;top:236px;width:10px;height:1px;background:#1d3d5a;"></div>
<div style="left:351px;top:237px;width:10px;height:13px;background:#609c00;box-shadow:inset 0 0 0 1px #68aa00;"></div>
<div style="left:357px;top:238px;width:2px;height:11px;background:#588e00;"></div>
<div style="left:351px;top:250px;width:10px;height:2px;background:#a03a3a;"></div>
<div style="left:340px;top:252px;width:21px;height:2px;background:#1f6076;"></div>
<div style="left:340px;top:255px;width:21px;height:1.5px;background:#2684a2;"></div>
<div style="left:345px;top:255px;width:1px;height:1.5px;background:#26263a;"></div>
<div style="left:350px;top:255px;width:1px;height:1.5px;background:#26263a;"></div>
<div style="left:356px;top:255px;width:1px;height:1.5px;background:#26263a;"></div>
<div style="left:340px;top:257px;width:21px;height:10px;background:#f1f36a;"></div>
<div style="left:372px;top:105px;width:36px;height:166px;border:1px solid #525252;box-sizing:border-box;"></div>
<div style="left:377px;top:122px;width:26px;height:71px;border:1px solid #525252;box-sizing:border-box;"></div>
<div style="left:378px;top:135px;width:23px;height:58px;background:#2c2c3a;"></div>
<div style="left:379px;top:136px;width:10px;height:4px;background:#1c586c;"></div>
<div style="left:379px;top:140px;width:10px;height:1px;background:#1d3d5a;"></div>
<div style="left:379px;top:141px;width:10px;height:13px;background:#609c00;box-shadow:inset 0 0 0 1px #68aa00;"></div>
<div style="left:385px;top:142px;width:2px;height:11px;background:#588e00;"></div>
<div style="left:379px;top:154px;width:10px;height:2px;background:#a03a3a;"></div>
<div style="left:379px;top:157px;width:10px;height:4px;background:#1c586c;"></div>
<div style="left:379px;top:161px;width:10px;height:1px;background:#1d3d5a;"></div>
<div style="left:379px;top:162px;width:10px;height:13px;background:#609c00;box-shadow:inset 0 0 0 1px #68aa00;"></div>
<div style="left:385px;top:163px;width:2px;height:11px;background:#588e00;"></div>
<div style="left:379px;top:175px;width:10px;height:2px;background:#a03a3a;"></div>
<div style="left:390px;top:136px;width:10px;height:4px;background:#1c586c;"></div>
<div style="left:390px;top:140px;width:10px;height:1px;background:#1d3d5a;"></div>
<div style="left:390px;top:141px;width:10px;height:13px;background:#609c00;box-shadow:inset 0 0 0 1px #68aa00;"></div>
<div style="left:396px;top:142px;width:2px;height:11px;background:#588e00;"></div>
<div style="left:390px;top:154px;width:10px;height:2px;background:#a03a3a;"></div>
<div style="left:390px;top:157px;width:10px;height:4px;background:#1c586c;"></div>
<div style="left:390px;top:161px;width:10px;height:1px;background:#1d3d5a;"></div>
<div style="left:390px;top:162px;width:10px;height:13px;background:#609c00;box-shadow:inset 0 0 0 1px #68aa00;"></div>
<div style="left:396px;top:163px;width:2px;height:11px;background:#588e00;"></div>
<div style="left:390px;top:175px;width:10px;height:2px;background:#a03a3a;"></div>
<div style="left:379px;top:177px;width:21px;height:2px;background:#1f6076;"></div>
<div style="left:379px;top:180px;width:21px;height:1.5px;background:#2684a2;"></div>
<div style="left:384px;top:180px;width:1px;height:1.5px;background:#26263a;"></div>
<div style="left:389px;top:180px;width:1px;height:1.5px;background:#26263a;"></div>
<div style="left:395px;top:180px;width:1px;height:1.5px;background:#26263a;"></div>
<div style="left:379px;top:182px;width:21px;height:10px;background:#f1f36a;"></div>
<div style="left:377px;top:197px;width:26px;height:71px;border:1px solid #525252;box-sizing:border-box;"></div>
<div style="left:378px;top:210px;width:23px;height:58px;background:#2c2c3a;"></div>
<div style="left:379px;top:211px;width:10px;height:4px;background:#1c586c;"></div>
<div style="left:379px;top:215px;width:10px;height:1px;background:#1d3d5a;"></div>
<div style="left:379px;top:216px;width:10px;height:13px;background:#609c00;box-shadow:inset 0 0 0 1px #68aa00;"></div>
<div style="left:385px;top:217px;width:2px;height:11px;background:#588e00;"></div>
<div style="left:379px;top:229px;width:10px;height:2px;background:#a03a3a;"></div>
<div style="left:379px;top:232px;width:10px;height:4px;background:#1c586c;"></div>
<div style="left:379px;top:236px;width:10px;height:1px;background:#1d3d5a;"></div>
<div style="left:379px;top:237px;width:10px;height:13px;background:#609c00;box-shadow:inset 0 0 0 1px #68aa00;"></div>
<div style="left:385px;top:238px;width:2px;height:11px;background:#588e00;"></div>
<div style="left:379px;top:250px;width:10px;height:2px;background:#a03a3a;"></div>
<div style="left:390px;top:211px;width:10px;height:4px;background:#1c586c;"></div>
<div style="left:390px;top:215px;width:10px;height:1px;background:#1d3d5a;"></div>
<div style="left:390px;top:216px;width:10px;height:13px;background:#609c00;box-shadow:inset 0 0 0 1px #68aa00;"></div>
<div style="left:396px;top:217px;width:2px;height:11px;background:#588e00;"></div>
<div style="left:390px;top:229px;width:10px;height:2px;background:#a03a3a;"></div>
<div style="left:390px;top:232px;width:10px;height:4px;background:#1c586c;"></div>
<div style="left:390px;top:236px;width:10px;height:1px;background:#1d3d5a;"></div>
<div style="left:390px;top:237px;width:10px;height:13px;background:#609c00;box-shadow:inset 0 0 0 1px #68aa00;"></div>
<div style="left:396px;top:238px;width:2px;height:11px;background:#588e00;"></div>
<div style="left:390px;top:250px;width:10px;height:2px;background:#a03a3a;"></div>
<div style="left:379px;top:252px;width:21px;height:2px;background:#1f6076;"></div>
<div style="left:379px;top:255px;width:21px;height:1.5px;background:#2684a2;"></div>
<div style="left:384px;top:255px;width:1px;height:1.5px;background:#26263a;"></div>
<div style="left:389px;top:255px;width:1px;height:1.5px;background:#26263a;"></div>
<div style="left:395px;top:255px;width:1px;height:1.5px;background:#26263a;"></div>
<div style="left:379px;top:257px;width:21px;height:10px;background:#f1f36a;"></div>
<div style="left:411px;top:105px;width:36px;height:166px;border:1px solid #525252;box-sizing:border-box;"></div>
<div style="left:416px;top:122px;width:26px;height:71px;border:1px solid #525252;box-sizing:border-box;"></div>
<div style="left:417px;top:135px;width:23px;height:58px;background:#2c2c3a;"></div>
<div style="left:418px;top:136px;width:10px;height:4px;background:#1c586c;"></div>
<div style="left:418px;top:140px;width:10px;height:1px;background:#1d3d5a;"></div>
<div style="left:418px;top:141px;width:10px;height:13px;background:#609c00;box-shadow:inset 0 0 0 1px #68aa00;"></div>
<div style="left:424px;top:142px;width:2px;height:11px;background:#588e00;"></div>
<div style="left:418px;top:154px;width:10px;height:2px;background:#a03a3a;"></div>
<div style="left:418px;top:157px;width:10px;height:4px;background:#1c586c;"></div>
<div style="left:418px;top:161px;width:10px;height:1px;background:#1d3d5a;"></div>
<div style="left:418px;top:162px;width:10px;height:13px;background:#609c00;box-shadow:inset 0 0 0 1px #68aa00;"></div>
<div style="left:424px;top:163px;width:2px;height:11px;background:#588e00;"></div>
<div style="left:418px;top:175px;width:10px;height:2px;background:#a03a3a;"></div>
<div style="left:429px;top:136px;width:10px;height:4px;background:#1c586c;"></div>
<div style="left:429px;top:140px;width:10px;height:1px;background:#1d3d5a;"></div>
<div style="left:429px;top:141px;width:10px;height:13px;background:#609c00;box-shadow:inset 0 0 0 1px #68aa00;"></div>
<div style="left:435px;top:142px;width:2px;height:11px;background:#588e00;"></div>
<div style="left:429px;top:154px;width:10px;height:2px;background:#a03a3a;"></div>
<div style="left:429px;top:157px;width:10px;height:4px;background:#1c586c;"></div>
<div style="left:429px;top:161px;width:10px;height:1px;background:#1d3d5a;"></div>
<div style="left:429px;top:162px;width:10px;height:13px;background:#609c00;box-shadow:inset 0 0 0 1px #68aa00;"></div>
<div style="left:435px;top:163px;width:2px;height:11px;background:#588e00;"></div>
<div style="left:429px;top:175px;width:10px;height:2px;background:#a03a3a;"></div>
<div style="left:418px;top:177px;width:21px;height:2px;background:#1f6076;"></div>
<div style="left:418px;top:180px;width:21px;height:1.5px;background:#2684a2;"></div>
<div style="left:423px;top:180px;width:1px;height:1.5px;background:#26263a;"></div>
<div style="left:428px;top:180px;width:1px;height:1.5px;background:#26263a;"></div>
<div style="left:434px;top:180px;width:1px;height:1.5px;background:#26263a;"></div>
<div style="left:418px;top:182px;width:21px;height:10px;background:#f1f36a;"></div>
<div style="left:416px;top:197px;width:26px;height:71px;border:1px solid #525252;box-sizing:border-box;"></div>
<div style="left:417px;top:210px;width:23px;height:58px;background:#2c2c3a;"></div>
<div style="left:418px;top:211px;width:10px;height:4px;background:#1c586c;"></div>
<div style="left:418px;top:215px;width:10px;height:1px;background:#1d3d5a;"></div>
<div style="left:418px;top:216px;width:10px;height:13px;background:#609c00;box-shadow:inset 0 0 0 1px #68aa00;"></div>
<div style="left:424px;top:217px;width:2px;height:11px;background:#588e00;"></div>
<div style="left:418px;top:229px;width:10px;height:2px;background:#a03a3a;"></div>
<div style="left:418px;top:232px;width:10px;height:4px;background:#1c586c;"></div>
<div style="left:418px;top:236px;width:10px;height:1px;background:#1d3d5a;"></div>
<div style="left:418px;top:237px;width:10px;height:13px;background:#609c00;box-shadow:inset 0 0 0 1px #68aa00;"></div>
<div style="left:424px;top:238px;width:2px;height:11px;background:#588e00;"></div>
<div style="left:418px;top:250px;width:10px;height:2px;background:#a03a3a;"></div>
<div style="left:429px;top:211px;width:10px;height:4px;background:#1c586c;"></div>
<div style="left:429px;top:215px;width:10px;height:1px;background:#1d3d5a;"></div>
<div style="left:429px;top:216px;width:10px;height:13px;background:#609c00;box-shadow:inset 0 0 0 1px #68aa00;"></div>
<div style="left:435px;top:217px;width:2px;height:11px;background:#588e00;"></div>
<div style="left:429px;top:229px;width:10px;height:2px;background:#a03a3a;"></div>
<div style="left:429px;top:232px;width:10px;height:4px;background:#1c586c;"></div>
<div style="left:429px;top:236px;width:10px;height:1px;background:#1d3d5a;"></div>
<div style="left:429px;top:237px;width:10px;height:13px;background:#609c00;box-shadow:inset 0 0 0 1px #68aa00;"></div>
<div style="left:435px;top:238px;width:2px;height:11px;background:#588e00;"></div>
<div style="left:429px;top:250px;width:10px;height:2px;background:#a03a3a;"></div>
<div style="left:418px;top:252px;width:21px;height:2px;background:#1f6076;"></div>
<div style="left:418px;top:255px;width:21px;height:1.5px;background:#2684a2;"></div>
<div style="left:423px;top:255px;width:1px;height:1.5px;background:#26263a;"></div>
<div style="left:428px;top:255px;width:1px;height:1.5px;background:#26263a;"></div>
<div style="left:434px;top:255px;width:1px;height:1.5px;background:#26263a;"></div>
<div style="left:418px;top:257px;width:21px;height:10px;background:#f1f36a;"></div>
<div style="left:255px;top:273px;width:95px;height:9px;border:1px solid #525252;box-sizing:border-box;"></div>
<div style="left:352px;top:273px;width:95px;height:9px;border:1px solid #525252;box-sizing:border-box;"></div>
<div style="left:258px;top:276px;width:21px;height:3px;background:#1d5d72;"></div>
<div style="left:280px;top:276px;width:22px;height:3px;background:#1d5d72;"></div>
<div style="left:303px;top:276px;width:10px;height:3px;background:#1d5d72;"></div>
<div style="left:314px;top:276px;width:32px;height:3px;background:#1d5d72;"></div>
<div style="left:355px;top:276px;width:20px;height:3px;background:#1d5d72;"></div>
<div style="left:377px;top:276px;width:10px;height:3px;background:#1d5d72;"></div>
<div style="left:388px;top:276px;width:10px;height:3px;background:#1d5d72;"></div>
<div style="left:400px;top:276px;width:9px;height:3px;background:#1d5d72;"></div>
<div style="left:410px;top:276px;width:22px;height:3px;background:#1d5d72;"></div>
<div style="left:433px;top:276px;width:10px;height:3px;background:#1d5d72;"></div>
<div style="left:454px;top:73px;width:203px;height:215px;background:#3e3e3e;border:1px solid #ececec;box-sizing:border-box;box-shadow:0 0 0 1px #121212, inset 0 0 0 1px #2c2c2c;"></div>
<div style="left:461px;top:88px;width:190px;height:13px;background:#1e5a6a;box-shadow:0 0 0 1px #2a2a2a;"></div>
<div style="left:460px;top:105px;width:36px;height:166px;border:1px solid #525252;box-sizing:border-box;"></div>
<div style="left:465px;top:122px;width:26px;height:71px;border:1px solid #525252;box-sizing:border-box;"></div>
<div style="left:466px;top:135px;width:23px;height:58px;background:#2c2c3a;"></div>
<div style="left:467px;top:136px;width:10px;height:4px;background:#1c586c;"></div>
<div style="left:467px;top:140px;width:10px;height:1px;background:#1d3d5a;"></div>
<div style="left:467px;top:141px;width:10px;height:13px;background:#609c00;box-shadow:inset 0 0 0 1px #68aa00;"></div>
<div style="left:473px;top:142px;width:2px;height:11px;background:#588e00;"></div>
<div style="left:467px;top:154px;width:10px;height:2px;background:#a03a3a;"></div>
<div style="left:467px;top:157px;width:10px;height:4px;background:#1c586c;"></div>
<div style="left:467px;top:161px;width:10px;height:1px;background:#1d3d5a;"></div>
<div style="left:467px;top:162px;width:10px;height:13px;background:#609c00;box-shadow:inset 0 0 0 1px #68aa00;"></div>
<div style="left:473px;top:163px;width:2px;height:11px;background:#588e00;"></div>
<div style="left:467px;top:175px;width:10px;height:2px;background:#a03a3a;"></div>
<div style="left:478px;top:136px;width:10px;height:4px;background:#1c586c;"></div>
<div style="left:478px;top:140px;width:10px;height:1px;background:#1d3d5a;"></div>
<div style="left:478px;top:141px;width:10px;height:13px;background:#609c00;box-shadow:inset 0 0 0 1px #68aa00;"></div>
<div style="left:484px;top:142px;width:2px;height:11px;background:#588e00;"></div>
<div style="left:478px;top:154px;width:10px;height:2px;background:#a03a3a;"></div>
<div style="left:478px;top:157px;width:10px;height:4px;background:#1c586c;"></div>
<div style="left:478px;top:161px;width:10px;height:1px;background:#1d3d5a;"></div>
<div style="left:478px;top:162px;width:10px;height:13px;background:#609c00;box-shadow:inset 0 0 0 1px #68aa00;"></div>
<div style="left:484px;top:163px;width:2px;height:11px;background:#588e00;"></div>
<div style="left:478px;top:175px;width:10px;height:2px;background:#a03a3a;"></div>
<div style="left:467px;top:177px;width:21px;height:2px;background:#1f6076;"></div>
<div style="left:467px;top:180px;width:21px;height:1.5px;background:#2684a2;"></div>
<div style="left:472px;top:180px;width:1px;height:1.5px;background:#26263a;"></div>
<div style="left:477px;top:180px;width:1px;height:1.5px;background:#26263a;"></div>
<div style="left:483px;top:180px;width:1px;height:1.5px;background:#26263a;"></div>
<div style="left:467px;top:182px;width:21px;height:10px;background:#f1f36a;"></div>
<div style="left:465px;top:197px;width:26px;height:71px;border:1px solid #525252;box-sizing:border-box;"></div>
<div style="left:466px;top:210px;width:23px;height:58px;background:#2c2c3a;"></div>
<div style="left:467px;top:211px;width:10px;height:4px;background:#1c586c;"></div>
<div style="left:467px;top:215px;width:10px;height:1px;background:#1d3d5a;"></div>
<div style="left:467px;top:216px;width:10px;height:13px;background:#609c00;box-shadow:inset 0 0 0 1px #68aa00;"></div>
<div style="left:473px;top:217px;width:2px;height:11px;background:#588e00;"></div>
<div style="left:467px;top:229px;width:10px;height:2px;background:#a03a3a;"></div>
<div style="left:467px;top:232px;width:10px;height:4px;background:#1c586c;"></div>
<div style="left:467px;top:236px;width:10px;height:1px;background:#1d3d5a;"></div>
<div style="left:467px;top:237px;width:10px;height:13px;background:#609c00;box-shadow:inset 0 0 0 1px #68aa00;"></div>
<div style="left:473px;top:238px;width:2px;height:11px;background:#588e00;"></div>
<div style="left:467px;top:250px;width:10px;height:2px;background:#a03a3a;"></div>
<div style="left:478px;top:211px;width:10px;height:4px;background:#1c586c;"></div>
<div style="left:478px;top:215px;width:10px;height:1px;background:#1d3d5a;"></div>
<div style="left:478px;top:216px;width:10px;height:13px;background:#609c00;box-shadow:inset 0 0 0 1px #68aa00;"></div>
<div style="left:484px;top:217px;width:2px;height:11px;background:#588e00;"></div>
<div style="left:478px;top:229px;width:10px;height:2px;background:#a03a3a;"></div>
<div style="left:478px;top:232px;width:10px;height:4px;background:#1c586c;"></div>
<div style="left:478px;top:236px;width:10px;height:1px;background:#1d3d5a;"></div>
<div style="left:478px;top:237px;width:10px;height:13px;background:#609c00;box-shadow:inset 0 0 0 1px #68aa00;"></div>
<div style="left:484px;top:238px;width:2px;height:11px;background:#588e00;"></div>
<div style="left:478px;top:250px;width:10px;height:2px;background:#a03a3a;"></div>
<div style="left:467px;top:252px;width:21px;height:2px;background:#1f6076;"></div>
<div style="left:467px;top:255px;width:21px;height:1.5px;background:#2684a2;"></div>
<div style="left:472px;top:255px;width:1px;height:1.5px;background:#26263a;"></div>
<div style="left:477px;top:255px;width:1px;height:1.5px;background:#26263a;"></div>
<div style="left:483px;top:255px;width:1px;height:1.5px;background:#26263a;"></div>
<div style="left:467px;top:257px;width:21px;height:10px;background:#f1f36a;"></div>
<div style="left:499px;top:105px;width:36px;height:166px;border:1px solid #525252;box-sizing:border-box;"></div>
<div style="left:504px;top:122px;width:26px;height:71px;border:1px solid #525252;box-sizing:border-box;"></div>
<div style="left:505px;top:135px;width:23px;height:58px;background:#2c2c3a;"></div>
<div style="left:506px;top:136px;width:10px;height:4px;background:#1c586c;"></div>
<div style="left:506px;top:140px;width:10px;height:1px;background:#1d3d5a;"></div>
<div style="left:506px;top:141px;width:10px;height:13px;background:#609c00;box-shadow:inset 0 0 0 1px #68aa00;"></div>
<div style="left:512px;top:142px;width:2px;height:11px;background:#588e00;"></div>
<div style="left:506px;top:154px;width:10px;height:2px;background:#a03a3a;"></div>
<div style="left:506px;top:157px;width:10px;height:4px;background:#1c586c;"></div>
<div style="left:506px;top:161px;width:10px;height:1px;background:#1d3d5a;"></div>
<div style="left:506px;top:162px;width:10px;height:13px;background:#609c00;box-shadow:inset 0 0 0 1px #68aa00;"></div>
<div style="left:512px;top:163px;width:2px;height:11px;background:#588e00;"></div>
<div style="left:506px;top:175px;width:10px;height:2px;background:#a03a3a;"></div>
<div style="left:517px;top:136px;width:10px;height:4px;background:#1c586c;"></div>
<div style="left:517px;top:140px;width:10px;height:1px;background:#1d3d5a;"></div>
<div style="left:517px;top:141px;width:10px;height:13px;background:#609c00;box-shadow:inset 0 0 0 1px #68aa00;"></div>
<div style="left:523px;top:142px;width:2px;height:11px;background:#588e00;"></div>
<div style="left:517px;top:154px;width:10px;height:2px;background:#a03a3a;"></div>
<div style="left:517px;top:157px;width:10px;height:4px;background:#1c586c;"></div>
<div style="left:517px;top:161px;width:10px;height:1px;background:#1d3d5a;"></div>
<div style="left:517px;top:162px;width:10px;height:13px;background:#609c00;box-shadow:inset 0 0 0 1px #68aa00;"></div>
<div style="left:523px;top:163px;width:2px;height:11px;background:#588e00;"></div>
<div style="left:517px;top:175px;width:10px;height:2px;background:#a03a3a;"></div>
<div style="left:506px;top:177px;width:21px;height:2px;background:#1f6076;"></div>
<div style="left:506px;top:180px;width:21px;height:1.5px;background:#2684a2;"></div>
<div style="left:511px;top:180px;width:1px;height:1.5px;background:#26263a;"></div>
<div style="left:516px;top:180px;width:1px;height:1.5px;background:#26263a;"></div>
<div style="left:522px;top:180px;width:1px;height:1.5px;background:#26263a;"></div>
<div style="left:506px;top:182px;width:21px;height:10px;background:#f1f36a;"></div>
<div style="left:504px;top:197px;width:26px;height:71px;border:1px solid #525252;box-sizing:border-box;"></div>
<div style="left:505px;top:210px;width:23px;height:58px;background:#2c2c3a;"></div>
<div style="left:506px;top:211px;width:10px;height:4px;background:#1c586c;"></div>
<div style="left:506px;top:215px;width:10px;height:1px;background:#1d3d5a;"></div>
<div style="left:506px;top:216px;width:10px;height:13px;background:#609c00;box-shadow:inset 0 0 0 1px #68aa00;"></div>
<div style="left:512px;top:217px;width:2px;height:11px;background:#588e00;"></div>
<div style="left:506px;top:229px;width:10px;height:2px;background:#a03a3a;"></div>
<div style="left:506px;top:232px;width:10px;height:4px;background:#1c586c;"></div>
<div style="left:506px;top:236px;width:10px;height:1px;background:#1d3d5a;"></div>
<div style="left:506px;top:237px;width:10px;height:13px;background:#609c00;box-shadow:inset 0 0 0 1px #68aa00;"></div>
<div style="left:512px;top:238px;width:2px;height:11px;background:#588e00;"></div>
<div style="left:506px;top:250px;width:10px;height:2px;background:#a03a3a;"></div>
<div style="left:517px;top:211px;width:10px;height:4px;background:#1c586c;"></div>
<div style="left:517px;top:215px;width:10px;height:1px;background:#1d3d5a;"></div>
<div style="left:517px;top:216px;width:10px;height:13px;background:#609c00;box-shadow:inset 0 0 0 1px #68aa00;"></div>
<div style="left:523px;top:217px;width:2px;height:11px;background:#588e00;"></div>
<div style="left:517px;top:229px;width:10px;height:2px;background:#a03a3a;"></div>
<div style="left:517px;top:232px;width:10px;height:4px;background:#1c586c;"></div>
<div style="left:517px;top:236px;width:10px;height:1px;background:#1d3d5a;"></div>
<div style="left:517px;top:237px;width:10px;height:13px;background:#609c00;box-shadow:inset 0 0 0 1px #68aa00;"></div>
<div style="left:523px;top:238px;width:2px;height:11px;background:#588e00;"></div>
<div style="left:517px;top:250px;width:10px;height:2px;background:#a03a3a;"></div>
<div style="left:506px;top:252px;width:21px;height:2px;background:#1f6076;"></div>
<div style="left:506px;top:255px;width:21px;height:1.5px;background:#2684a2;"></div>
<div style="left:511px;top:255px;width:1px;height:1.5px;background:#26263a;"></div>
<div style="left:516px;top:255px;width:1px;height:1.5px;background:#26263a;"></div>
<div style="left:522px;top:255px;width:1px;height:1.5px;background:#26263a;"></div>
<div style="left:506px;top:257px;width:21px;height:10px;background:#f1f36a;"></div>
<div style="left:538px;top:105px;width:36px;height:166px;border:1px solid #525252;box-sizing:border-box;"></div>
<div style="left:543px;top:122px;width:26px;height:71px;border:1px solid #525252;box-sizing:border-box;"></div>
<div style="left:544px;top:135px;width:23px;height:58px;background:#2c2c3a;"></div>
<div style="left:545px;top:136px;width:10px;height:4px;background:#1c586c;"></div>
<div style="left:545px;top:140px;width:10px;height:1px;background:#1d3d5a;"></div>
<div style="left:545px;top:141px;width:10px;height:13px;background:#609c00;box-shadow:inset 0 0 0 1px #68aa00;"></div>
<div style="left:551px;top:142px;width:2px;height:11px;background:#588e00;"></div>
<div style="left:545px;top:154px;width:10px;height:2px;background:#a03a3a;"></div>
<div style="left:545px;top:157px;width:10px;height:4px;background:#1c586c;"></div>
<div style="left:545px;top:161px;width:10px;height:1px;background:#1d3d5a;"></div>
<div style="left:545px;top:162px;width:10px;height:13px;background:#609c00;box-shadow:inset 0 0 0 1px #68aa00;"></div>
<div style="left:551px;top:163px;width:2px;height:11px;background:#588e00;"></div>
<div style="left:545px;top:175px;width:10px;height:2px;background:#a03a3a;"></div>
<div style="left:556px;top:136px;width:10px;height:4px;background:#1c586c;"></div>
<div style="left:556px;top:140px;width:10px;height:1px;background:#1d3d5a;"></div>
<div style="left:556px;top:141px;width:10px;height:13px;background:#609c00;box-shadow:inset 0 0 0 1px #68aa00;"></div>
<div style="left:562px;top:142px;width:2px;height:11px;background:#588e00;"></div>
<div style="left:556px;top:154px;width:10px;height:2px;background:#a03a3a;"></div>
<div style="left:556px;top:157px;width:10px;height:4px;background:#1c586c;"></div>
<div style="left:556px;top:161px;width:10px;height:1px;background:#1d3d5a;"></div>
<div style="left:556px;top:162px;width:10px;height:13px;background:#609c00;box-shadow:inset 0 0 0 1px #68aa00;"></div>
<div style="left:562px;top:163px;width:2px;height:11px;background:#588e00;"></div>
<div style="left:556px;top:175px;width:10px;height:2px;background:#a03a3a;"></div>
<div style="left:545px;top:177px;width:21px;height:2px;background:#1f6076;"></div>
<div style="left:545px;top:180px;width:21px;height:1.5px;background:#2684a2;"></div>
<div style="left:550px;top:180px;width:1px;height:1.5px;background:#26263a;"></div>
<div style="left:555px;top:180px;width:1px;height:1.5px;background:#26263a;"></div>
<div style="left:561px;top:180px;width:1px;height:1.5px;background:#26263a;"></div>
<div style="left:545px;top:182px;width:21px;height:10px;background:#f1f36a;"></div>
<div style="left:543px;top:197px;width:26px;height:71px;border:1px solid #525252;box-sizing:border-box;"></div>
<div style="left:544px;top:210px;width:23px;height:58px;background:#2c2c3a;"></div>
<div style="left:545px;top:211px;width:10px;height:4px;background:#1c586c;"></div>
<div style="left:545px;top:215px;width:10px;height:1px;background:#1d3d5a;"></div>
<div style="left:545px;top:216px;width:10px;height:13px;background:#609c00;box-shadow:inset 0 0 0 1px #68aa00;"></div>
<div style="left:551px;top:217px;width:2px;height:11px;background:#588e00;"></div>
<div style="left:545px;top:229px;width:10px;height:2px;background:#a03a3a;"></div>
<div style="left:545px;top:232px;width:10px;height:4px;background:#1c586c;"></div>
<div style="left:545px;top:236px;width:10px;height:1px;background:#1d3d5a;"></div>
<div style="left:545px;top:237px;width:10px;height:13px;background:#609c00;box-shadow:inset 0 0 0 1px #68aa00;"></div>
<div style="left:551px;top:238px;width:2px;height:11px;background:#588e00;"></div>
<div style="left:545px;top:250px;width:10px;height:2px;background:#a03a3a;"></div>
<div style="left:556px;top:211px;width:10px;height:4px;background:#1c586c;"></div>
<div style="left:556px;top:215px;width:10px;height:1px;background:#1d3d5a;"></div>
<div style="left:556px;top:216px;width:10px;height:13px;background:#609c00;box-shadow:inset 0 0 0 1px #68aa00;"></div>
<div style="left:562px;top:217px;width:2px;height:11px;background:#588e00;"></div>
<div style="left:556px;top:229px;width:10px;height:2px;background:#a03a3a;"></div>
<div style="left:556px;top:232px;width:10px;height:4px;background:#1c586c;"></div>
<div style="left:556px;top:236px;width:10px;height:1px;background:#1d3d5a;"></div>
<div style="left:556px;top:237px;width:10px;height:13px;background:#609c00;box-shadow:inset 0 0 0 1px #68aa00;"></div>
<div style="left:562px;top:238px;width:2px;height:11px;background:#588e00;"></div>
<div style="left:556px;top:250px;width:10px;height:2px;background:#a03a3a;"></div>
<div style="left:545px;top:252px;width:21px;height:2px;background:#1f6076;"></div>
<div style="left:545px;top:255px;width:21px;height:1.5px;background:#2684a2;"></div>
<div style="left:550px;top:255px;width:1px;height:1.5px;background:#26263a;"></div>
<div style="left:555px;top:255px;width:1px;height:1.5px;background:#26263a;"></div>
<div style="left:561px;top:255px;width:1px;height:1.5px;background:#26263a;"></div>
<div style="left:545px;top:257px;width:21px;height:10px;background:#f1f36a;"></div>
<div style="left:577px;top:105px;width:36px;height:166px;border:1px solid #525252;box-sizing:border-box;"></div>
<div style="left:582px;top:122px;width:26px;height:71px;border:1px solid #525252;box-sizing:border-box;"></div>
<div style="left:583px;top:135px;width:23px;height:58px;background:#2c2c3a;"></div>
<div style="left:584px;top:136px;width:10px;height:4px;background:#1c586c;"></div>
<div style="left:584px;top:140px;width:10px;height:1px;background:#1d3d5a;"></div>
<div style="left:584px;top:141px;width:10px;height:13px;background:#609c00;box-shadow:inset 0 0 0 1px #68aa00;"></div>
<div style="left:590px;top:142px;width:2px;height:11px;background:#588e00;"></div>
<div style="left:584px;top:154px;width:10px;height:2px;background:#a03a3a;"></div>
<div style="left:584px;top:157px;width:10px;height:4px;background:#1c586c;"></div>
<div style="left:584px;top:161px;width:10px;height:1px;background:#1d3d5a;"></div>
<div style="left:584px;top:162px;width:10px;height:13px;background:#609c00;box-shadow:inset 0 0 0 1px #68aa00;"></div>
<div style="left:590px;top:163px;width:2px;height:11px;background:#588e00;"></div>
<div style="left:584px;top:175px;width:10px;height:2px;background:#a03a3a;"></div>
<div style="left:595px;top:136px;width:10px;height:4px;background:#1c586c;"></div>
<div style="left:595px;top:140px;width:10px;height:1px;background:#1d3d5a;"></div>
<div style="left:595px;top:141px;width:10px;height:13px;background:#609c00;box-shadow:inset 0 0 0 1px #68aa00;"></div>
<div style="left:601px;top:142px;width:2px;height:11px;background:#588e00;"></div>
<div style="left:595px;top:154px;width:10px;height:2px;background:#a03a3a;"></div>
<div style="left:595px;top:157px;width:10px;height:4px;background:#1c586c;"></div>
<div style="left:595px;top:161px;width:10px;height:1px;background:#1d3d5a;"></div>
<div style="left:595px;top:162px;width:10px;height:13px;background:#609c00;box-shadow:inset 0 0 0 1px #68aa00;"></div>
<div style="left:601px;top:163px;width:2px;height:11px;background:#588e00;"></div>
<div style="left:595px;top:175px;width:10px;height:2px;background:#a03a3a;"></div>
<div style="left:584px;top:177px;width:21px;height:2px;background:#1f6076;"></div>
<div style="left:584px;top:180px;width:21px;height:1.5px;background:#2684a2;"></div>
<div style="left:589px;top:180px;width:1px;height:1.5px;background:#26263a;"></div>
<div style="left:594px;top:180px;width:1px;height:1.5px;background:#26263a;"></div>
<div style="left:600px;top:180px;width:1px;height:1.5px;background:#26263a;"></div>
<div style="left:584px;top:182px;width:21px;height:10px;background:#f1f36a;"></div>
<div style="left:582px;top:197px;width:26px;height:71px;border:1px solid #525252;box-sizing:border-box;"></div>
<div style="left:583px;top:210px;width:23px;height:58px;background:#2c2c3a;"></div>
<div style="left:584px;top:211px;width:10px;height:4px;background:#1c586c;"></div>
<div style="left:584px;top:215px;width:10px;height:1px;background:#1d3d5a;"></div>
<div style="left:584px;top:216px;width:10px;height:13px;background:#609c00;box-shadow:inset 0 0 0 1px #68aa00;"></div>
<div style="left:590px;top:217px;width:2px;height:11px;background:#588e00;"></div>
<div style="left:584px;top:229px;width:10px;height:2px;background:#a03a3a;"></div>
<div style="left:584px;top:232px;width:10px;height:4px;background:#1c586c;"></div>
<div style="left:584px;top:236px;width:10px;height:1px;background:#1d3d5a;"></div>
<div style="left:584px;top:237px;width:10px;height:13px;background:#609c00;box-shadow:inset 0 0 0 1px #68aa00;"></div>
<div style="left:590px;top:238px;width:2px;height:11px;background:#588e00;"></div>
<div style="left:584px;top:250px;width:10px;height:2px;background:#a03a3a;"></div>
<div style="left:595px;top:211px;width:10px;height:4px;background:#1c586c;"></div>
<div style="left:595px;top:215px;width:10px;height:1px;background:#1d3d5a;"></div>
<div style="left:595px;top:216px;width:10px;height:13px;background:#609c00;box-shadow:inset 0 0 0 1px #68aa00;"></div>
<div style="left:601px;top:217px;width:2px;height:11px;background:#588e00;"></div>
<div style="left:595px;top:229px;width:10px;height:2px;background:#a03a3a;"></div>
<div style="left:595px;top:232px;width:10px;height:4px;background:#1c586c;"></div>
<div style="left:595px;top:236px;width:10px;height:1px;background:#1d3d5a;"></div>
<div style="left:595px;top:237px;width:10px;height:13px;background:#609c00;box-shadow:inset 0 0 0 1px #68aa00;"></div>
<div style="left:601px;top:238px;width:2px;height:11px;background:#588e00;"></div>
<div style="left:595px;top:250px;width:10px;height:2px;background:#a03a3a;"></div>
<div style="left:584px;top:252px;width:21px;height:2px;background:#1f6076;"></div>
<div style="left:584px;top:255px;width:21px;height:1.5px;background:#2684a2;"></div>
<div style="left:589px;top:255px;width:1px;height:1.5px;background:#26263a;"></div>
<div style="left:594px;top:255px;width:1px;height:1.5px;background:#26263a;"></div>
<div style="left:600px;top:255px;width:1px;height:1.5px;background:#26263a;"></div>
<div style="left:584px;top:257px;width:21px;height:10px;background:#f1f36a;"></div>
<div style="left:616px;top:105px;width:36px;height:166px;border:1px solid #525252;box-sizing:border-box;"></div>
<div style="left:621px;top:122px;width:26px;height:71px;border:1px solid #525252;box-sizing:border-box;"></div>
<div style="left:622px;top:135px;width:23px;height:58px;background:#2c2c3a;"></div>
<div style="left:623px;top:136px;width:10px;height:4px;background:#1c586c;"></div>
<div style="left:623px;top:140px;width:10px;height:1px;background:#1d3d5a;"></div>
<div style="left:623px;top:141px;width:10px;height:13px;background:#609c00;box-shadow:inset 0 0 0 1px #68aa00;"></div>
<div style="left:629px;top:142px;width:2px;height:11px;background:#588e00;"></div>
<div style="left:623px;top:154px;width:10px;height:2px;background:#a03a3a;"></div>
<div style="left:623px;top:157px;width:10px;height:4px;background:#1c586c;"></div>
<div style="left:623px;top:161px;width:10px;height:1px;background:#1d3d5a;"></div>
<div style="left:623px;top:162px;width:10px;height:13px;background:#609c00;box-shadow:inset 0 0 0 1px #68aa00;"></div>
<div style="left:629px;top:163px;width:2px;height:11px;background:#588e00;"></div>
<div style="left:623px;top:175px;width:10px;height:2px;background:#a03a3a;"></div>
<div style="left:634px;top:136px;width:10px;height:4px;background:#1c586c;"></div>
<div style="left:634px;top:140px;width:10px;height:1px;background:#1d3d5a;"></div>
<div style="left:634px;top:141px;width:10px;height:13px;background:#609c00;box-shadow:inset 0 0 0 1px #68aa00;"></div>
<div style="left:640px;top:142px;width:2px;height:11px;background:#588e00;"></div>
<div style="left:634px;top:154px;width:10px;height:2px;background:#a03a3a;"></div>
<div style="left:634px;top:157px;width:10px;height:4px;background:#1c586c;"></div>
<div style="left:634px;top:161px;width:10px;height:1px;background:#1d3d5a;"></div>
<div style="left:634px;top:162px;width:10px;height:13px;background:#609c00;box-shadow:inset 0 0 0 1px #68aa00;"></div>
<div style="left:640px;top:163px;width:2px;height:11px;background:#588e00;"></div>
<div style="left:634px;top:175px;width:10px;height:2px;background:#a03a3a;"></div>
<div style="left:623px;top:177px;width:21px;height:2px;background:#1f6076;"></div>
<div style="left:623px;top:180px;width:21px;height:1.5px;background:#2684a2;"></div>
<div style="left:628px;top:180px;width:1px;height:1.5px;background:#26263a;"></div>
<div style="left:633px;top:180px;width:1px;height:1.5px;background:#26263a;"></div>
<div style="left:639px;top:180px;width:1px;height:1.5px;background:#26263a;"></div>
<div style="left:623px;top:182px;width:21px;height:10px;background:#f1f36a;"></div>
<div style="left:621px;top:197px;width:26px;height:71px;border:1px solid #525252;box-sizing:border-box;"></div>
<div style="left:622px;top:210px;width:23px;height:58px;background:#2c2c3a;"></div>
<div style="left:623px;top:211px;width:10px;height:4px;background:#1c586c;"></div>
<div style="left:623px;top:215px;width:10px;height:1px;background:#1d3d5a;"></div>
<div style="left:623px;top:216px;width:10px;height:13px;background:#609c00;box-shadow:inset 0 0 0 1px #68aa00;"></div>
<div style="left:629px;top:217px;width:2px;height:11px;background:#588e00;"></div>
<div style="left:623px;top:229px;width:10px;height:2px;background:#a03a3a;"></div>
<div style="left:623px;top:232px;width:10px;height:4px;background:#1c586c;"></div>
<div style="left:623px;top:236px;width:10px;height:1px;background:#1d3d5a;"></div>
<div style="left:623px;top:237px;width:10px;height:13px;background:#609c00;box-shadow:inset 0 0 0 1px #68aa00;"></div>
<div style="left:629px;top:238px;width:2px;height:11px;background:#588e00;"></div>
<div style="left:623px;top:250px;width:10px;height:2px;background:#a03a3a;"></div>
<div style="left:634px;top:211px;width:10px;height:4px;background:#1c586c;"></div>
<div style="left:634px;top:215px;width:10px;height:1px;background:#1d3d5a;"></div>
<div style="left:634px;top:216px;width:10px;height:13px;background:#609c00;box-shadow:inset 0 0 0 1px #68aa00;"></div>
<div style="left:640px;top:217px;width:2px;height:11px;background:#588e00;"></div>
<div style="left:634px;top:229px;width:10px;height:2px;background:#a03a3a;"></div>
<div style="left:634px;top:232px;width:10px;height:4px;background:#1c586c;"></div>
<div style="left:634px;top:236px;width:10px;height:1px;background:#1d3d5a;"></div>
<div style="left:634px;top:237px;width:10px;height:13px;background:#609c00;box-shadow:inset 0 0 0 1px #68aa00;"></div>
<div style="left:640px;top:238px;width:2px;height:11px;background:#588e00;"></div>
<div style="left:634px;top:250px;width:10px;height:2px;background:#a03a3a;"></div>
<div style="left:623px;top:252px;width:21px;height:2px;background:#1f6076;"></div>
<div style="left:623px;top:255px;width:21px;height:1.5px;background:#2684a2;"></div>
<div style="left:628px;top:255px;width:1px;height:1.5px;background:#26263a;"></div>
<div style="left:633px;top:255px;width:1px;height:1.5px;background:#26263a;"></div>
<div style="left:639px;top:255px;width:1px;height:1.5px;background:#26263a;"></div>
<div style="left:623px;top:257px;width:21px;height:10px;background:#f1f36a;"></div>
<div style="left:460px;top:273px;width:95px;height:9px;border:1px solid #525252;box-sizing:border-box;"></div>
<div style="left:557px;top:273px;width:95px;height:9px;border:1px solid #525252;box-sizing:border-box;"></div>
<div style="left:463px;top:276px;width:21px;height:3px;background:#1d5d72;"></div>
<div style="left:485px;top:276px;width:22px;height:3px;background:#1d5d72;"></div>
<div style="left:508px;top:276px;width:10px;height:3px;background:#1d5d72;"></div>
<div style="left:519px;top:276px;width:32px;height:3px;background:#1d5d72;"></div>
<div style="left:560px;top:276px;width:20px;height:3px;background:#1d5d72;"></div>
<div style="left:582px;top:276px;width:10px;height:3px;background:#1d5d72;"></div>
<div style="left:593px;top:276px;width:10px;height:3px;background:#1d5d72;"></div>
<div style="left:605px;top:276px;width:9px;height:3px;background:#1d5d72;"></div>
<div style="left:615px;top:276px;width:22px;height:3px;background:#1d5d72;"></div>
<div style="left:638px;top:276px;width:10px;height:3px;background:#1d5d72;"></div>
<div style="left:144px;top:375px;width:203px;height:215px;background:#3e3e3e;border:1px solid #ececec;box-sizing:border-box;box-shadow:0 0 0 1px #121212, inset 0 0 0 1px #2c2c2c;"></div>
<div style="left:150px;top:382px;width:95px;height:10px;border:1px solid #525252;box-sizing:border-box;"></div>
<div style="left:247px;top:382px;width:95px;height:10px;border:1px solid #525252;box-sizing:border-box;"></div>
<div style="left:153px;top:385px;width:21px;height:4px;background:#1d5d72;"></div>
<div style="left:175px;top:385px;width:22px;height:4px;background:#1d5d72;"></div>
<div style="left:198px;top:385px;width:10px;height:4px;background:#1d5d72;"></div>
<div style="left:209px;top:385px;width:32px;height:4px;background:#1d5d72;"></div>
<div style="left:250px;top:385px;width:20px;height:4px;background:#1d5d72;"></div>
<div style="left:272px;top:385px;width:10px;height:4px;background:#1d5d72;"></div>
<div style="left:283px;top:385px;width:10px;height:4px;background:#1d5d72;"></div>
<div style="left:295px;top:385px;width:9px;height:4px;background:#1d5d72;"></div>
<div style="left:305px;top:385px;width:22px;height:4px;background:#1d5d72;"></div>
<div style="left:328px;top:385px;width:10px;height:4px;background:#1d5d72;"></div>
<div style="left:150px;top:395px;width:36px;height:166px;border:1px solid #525252;box-sizing:border-box;"></div>
<div style="left:155px;top:397px;width:26px;height:71px;border:1px solid #525252;box-sizing:border-box;"></div>
<div style="left:156px;top:398px;width:23px;height:58px;background:#2c2c3a;"></div>
<div style="left:157px;top:451px;width:10px;height:4px;background:#1c586c;"></div>
<div style="left:157px;top:450px;width:10px;height:1px;background:#1d3d5a;"></div>
<div style="left:157px;top:437px;width:10px;height:13px;background:#609c00;box-shadow:inset 0 0 0 1px #68aa00;"></div>
<div style="left:159px;top:438px;width:2px;height:11px;background:#588e00;"></div>
<div style="left:157px;top:435px;width:10px;height:2px;background:#a03a3a;"></div>
<div style="left:157px;top:430px;width:10px;height:4px;background:#1c586c;"></div>
<div style="left:157px;top:429px;width:10px;height:1px;background:#1d3d5a;"></div>
<div style="left:157px;top:416px;width:10px;height:13px;background:#609c00;box-shadow:inset 0 0 0 1px #68aa00;"></div>
<div style="left:159px;top:417px;width:2px;height:11px;background:#588e00;"></div>
<div style="left:157px;top:414px;width:10px;height:2px;background:#a03a3a;"></div>
<div style="left:168px;top:451px;width:10px;height:4px;background:#1c586c;"></div>
<div style="left:168px;top:450px;width:10px;height:1px;background:#1d3d5a;"></div>
<div style="left:168px;top:437px;width:10px;height:13px;background:#609c00;box-shadow:inset 0 0 0 1px #68aa00;"></div>
<div style="left:170px;top:438px;width:2px;height:11px;background:#588e00;"></div>
<div style="left:168px;top:435px;width:10px;height:2px;background:#a03a3a;"></div>
<div style="left:168px;top:430px;width:10px;height:4px;background:#1c586c;"></div>
<div style="left:168px;top:429px;width:10px;height:1px;background:#1d3d5a;"></div>
<div style="left:168px;top:416px;width:10px;height:13px;background:#609c00;box-shadow:inset 0 0 0 1px #68aa00;"></div>
<div style="left:170px;top:417px;width:2px;height:11px;background:#588e00;"></div>
<div style="left:168px;top:414px;width:10px;height:2px;background:#a03a3a;"></div>
<div style="left:157px;top:412px;width:21px;height:2px;background:#1f6076;"></div>
<div style="left:157px;top:409.5px;width:21px;height:1.5px;background:#2684a2;"></div>
<div style="left:162px;top:409.5px;width:1px;height:1.5px;background:#26263a;"></div>
<div style="left:167px;top:409.5px;width:1px;height:1.5px;background:#26263a;"></div>
<div style="left:173px;top:409.5px;width:1px;height:1.5px;background:#26263a;"></div>
<div style="left:157px;top:399px;width:21px;height:10px;background:#f1f36a;"></div>
<div style="left:155px;top:472px;width:26px;height:71px;border:1px solid #525252;box-sizing:border-box;"></div>
<div style="left:156px;top:473px;width:23px;height:58px;background:#2c2c3a;"></div>
<div style="left:157px;top:526px;width:10px;height:4px;background:#1c586c;"></div>
<div style="left:157px;top:525px;width:10px;height:1px;background:#1d3d5a;"></div>
<div style="left:157px;top:512px;width:10px;height:13px;background:#609c00;box-shadow:inset 0 0 0 1px #68aa00;"></div>
<div style="left:159px;top:513px;width:2px;height:11px;background:#588e00;"></div>
<div style="left:157px;top:510px;width:10px;height:2px;background:#a03a3a;"></div>
<div style="left:157px;top:505px;width:10px;height:4px;background:#1c586c;"></div>
<div style="left:157px;top:504px;width:10px;height:1px;background:#1d3d5a;"></div>
<div style="left:157px;top:491px;width:10px;height:13px;background:#609c00;box-shadow:inset 0 0 0 1px #68aa00;"></div>
<div style="left:159px;top:492px;width:2px;height:11px;background:#588e00;"></div>
<div style="left:157px;top:489px;width:10px;height:2px;background:#a03a3a;"></div>
<div style="left:168px;top:526px;width:10px;height:4px;background:#1c586c;"></div>
<div style="left:168px;top:525px;width:10px;height:1px;background:#1d3d5a;"></div>
<div style="left:168px;top:512px;width:10px;height:13px;background:#609c00;box-shadow:inset 0 0 0 1px #68aa00;"></div>
<div style="left:170px;top:513px;width:2px;height:11px;background:#588e00;"></div>
<div style="left:168px;top:510px;width:10px;height:2px;background:#a03a3a;"></div>
<div style="left:168px;top:505px;width:10px;height:4px;background:#1c586c;"></div>
<div style="left:168px;top:504px;width:10px;height:1px;background:#1d3d5a;"></div>
<div style="left:168px;top:491px;width:10px;height:13px;background:#609c00;box-shadow:inset 0 0 0 1px #68aa00;"></div>
<div style="left:170px;top:492px;width:2px;height:11px;background:#588e00;"></div>
<div style="left:168px;top:489px;width:10px;height:2px;background:#a03a3a;"></div>
<div style="left:157px;top:487px;width:21px;height:2px;background:#1f6076;"></div>
<div style="left:157px;top:484.5px;width:21px;height:1.5px;background:#2684a2;"></div>
<div style="left:162px;top:484.5px;width:1px;height:1.5px;background:#26263a;"></div>
<div style="left:167px;top:484.5px;width:1px;height:1.5px;background:#26263a;"></div>
<div style="left:173px;top:484.5px;width:1px;height:1.5px;background:#26263a;"></div>
<div style="left:157px;top:474px;width:21px;height:10px;background:#f1f36a;"></div>
<div style="left:189px;top:395px;width:36px;height:166px;border:1px solid #525252;box-sizing:border-box;"></div>
<div style="left:194px;top:397px;width:26px;height:71px;border:1px solid #525252;box-sizing:border-box;"></div>
<div style="left:195px;top:398px;width:23px;height:58px;background:#2c2c3a;"></div>
<div style="left:196px;top:451px;width:10px;height:4px;background:#1c586c;"></div>
<div style="left:196px;top:450px;width:10px;height:1px;background:#1d3d5a;"></div>
<div style="left:196px;top:437px;width:10px;height:13px;background:#609c00;box-shadow:inset 0 0 0 1px #68aa00;"></div>
<div style="left:198px;top:438px;width:2px;height:11px;background:#588e00;"></div>
<div style="left:196px;top:435px;width:10px;height:2px;background:#a03a3a;"></div>
<div style="left:196px;top:430px;width:10px;height:4px;background:#1c586c;"></div>
<div style="left:196px;top:429px;width:10px;height:1px;background:#1d3d5a;"></div>
<div style="left:196px;top:416px;width:10px;height:13px;background:#609c00;box-shadow:inset 0 0 0 1px #68aa00;"></div>
<div style="left:198px;top:417px;width:2px;height:11px;background:#588e00;"></div>
<div style="left:196px;top:414px;width:10px;height:2px;background:#a03a3a;"></div>
<div style="left:207px;top:451px;width:10px;height:4px;background:#1c586c;"></div>
<div style="left:207px;top:450px;width:10px;height:1px;background:#1d3d5a;"></div>
<div style="left:207px;top:437px;width:10px;height:13px;background:#609c00;box-shadow:inset 0 0 0 1px #68aa00;"></div>
<div style="left:209px;top:438px;width:2px;height:11px;background:#588e00;"></div>
<div style="left:207px;top:435px;width:10px;height:2px;background:#a03a3a;"></div>
<div style="left:207px;top:430px;width:10px;height:4px;background:#1c586c;"></div>
<div style="left:207px;top:429px;width:10px;height:1px;background:#1d3d5a;"></div>
<div style="left:207px;top:416px;width:10px;height:13px;background:#609c00;box-shadow:inset 0 0 0 1px #68aa00;"></div>
<div style="left:209px;top:417px;width:2px;height:11px;background:#588e00;"></div>
<div style="left:207px;top:414px;width:10px;height:2px;background:#a03a3a;"></div>
<div style="left:196px;top:412px;width:21px;height:2px;background:#1f6076;"></div>
<div style="left:196px;top:409.5px;width:21px;height:1.5px;background:#2684a2;"></div>
<div style="left:201px;top:409.5px;width:1px;height:1.5px;background:#26263a;"></div>
<div style="left:206px;top:409.5px;width:1px;height:1.5px;background:#26263a;"></div>
<div style="left:212px;top:409.5px;width:1px;height:1.5px;background:#26263a;"></div>
<div style="left:196px;top:399px;width:21px;height:10px;background:#f1f36a;"></div>
<div style="left:194px;top:472px;width:26px;height:71px;border:1px solid #525252;box-sizing:border-box;"></div>
<div style="left:195px;top:473px;width:23px;height:58px;background:#2c2c3a;"></div>
<div style="left:196px;top:526px;width:10px;height:4px;background:#1c586c;"></div>
<div style="left:196px;top:525px;width:10px;height:1px;background:#1d3d5a;"></div>
<div style="left:196px;top:512px;width:10px;height:13px;background:#609c00;box-shadow:inset 0 0 0 1px #68aa00;"></div>
<div style="left:198px;top:513px;width:2px;height:11px;background:#588e00;"></div>
<div style="left:196px;top:510px;width:10px;height:2px;background:#a03a3a;"></div>
<div style="left:196px;top:505px;width:10px;height:4px;background:#1c586c;"></div>
<div style="left:196px;top:504px;width:10px;height:1px;background:#1d3d5a;"></div>
<div style="left:196px;top:491px;width:10px;height:13px;background:#609c00;box-shadow:inset 0 0 0 1px #68aa00;"></div>
<div style="left:198px;top:492px;width:2px;height:11px;background:#588e00;"></div>
<div style="left:196px;top:489px;width:10px;height:2px;background:#a03a3a;"></div>
<div style="left:207px;top:526px;width:10px;height:4px;background:#1c586c;"></div>
<div style="left:207px;top:525px;width:10px;height:1px;background:#1d3d5a;"></div>
<div style="left:207px;top:512px;width:10px;height:13px;background:#609c00;box-shadow:inset 0 0 0 1px #68aa00;"></div>
<div style="left:209px;top:513px;width:2px;height:11px;background:#588e00;"></div>
<div style="left:207px;top:510px;width:10px;height:2px;background:#a03a3a;"></div>
<div style="left:207px;top:505px;width:10px;height:4px;background:#1c586c;"></div>
<div style="left:207px;top:504px;width:10px;height:1px;background:#1d3d5a;"></div>
<div style="left:207px;top:491px;width:10px;height:13px;background:#609c00;box-shadow:inset 0 0 0 1px #68aa00;"></div>
<div style="left:209px;top:492px;width:2px;height:11px;background:#588e00;"></div>
<div style="left:207px;top:489px;width:10px;height:2px;background:#a03a3a;"></div>
<div style="left:196px;top:487px;width:21px;height:2px;background:#1f6076;"></div>
<div style="left:196px;top:484.5px;width:21px;height:1.5px;background:#2684a2;"></div>
<div style="left:201px;top:484.5px;width:1px;height:1.5px;background:#26263a;"></div>
<div style="left:206px;top:484.5px;width:1px;height:1.5px;background:#26263a;"></div>
<div style="left:212px;top:484.5px;width:1px;height:1.5px;background:#26263a;"></div>
<div style="left:196px;top:474px;width:21px;height:10px;background:#f1f36a;"></div>
<div style="left:228px;top:395px;width:36px;height:166px;border:1px solid #525252;box-sizing:border-box;"></div>
<div style="left:233px;top:397px;width:26px;height:71px;border:1px solid #525252;box-sizing:border-box;"></div>
<div style="left:234px;top:398px;width:23px;height:58px;background:#2c2c3a;"></div>
<div style="left:235px;top:451px;width:10px;height:4px;background:#1c586c;"></div>
<div style="left:235px;top:450px;width:10px;height:1px;background:#1d3d5a;"></div>
<div style="left:235px;top:437px;width:10px;height:13px;background:#609c00;box-shadow:inset 0 0 0 1px #68aa00;"></div>
<div style="left:237px;top:438px;width:2px;height:11px;background:#588e00;"></div>
<div style="left:235px;top:435px;width:10px;height:2px;background:#a03a3a;"></div>
<div style="left:235px;top:430px;width:10px;height:4px;background:#1c586c;"></div>
<div style="left:235px;top:429px;width:10px;height:1px;background:#1d3d5a;"></div>
<div style="left:235px;top:416px;width:10px;height:13px;background:#609c00;box-shadow:inset 0 0 0 1px #68aa00;"></div>
<div style="left:237px;top:417px;width:2px;height:11px;background:#588e00;"></div>
<div style="left:235px;top:414px;width:10px;height:2px;background:#a03a3a;"></div>
<div style="left:246px;top:451px;width:10px;height:4px;background:#1c586c;"></div>
<div style="left:246px;top:450px;width:10px;height:1px;background:#1d3d5a;"></div>
<div style="left:246px;top:437px;width:10px;height:13px;background:#609c00;box-shadow:inset 0 0 0 1px #68aa00;"></div>
<div style="left:248px;top:438px;width:2px;height:11px;background:#588e00;"></div>
<div style="left:246px;top:435px;width:10px;height:2px;background:#a03a3a;"></div>
<div style="left:246px;top:430px;width:10px;height:4px;background:#1c586c;"></div>
<div style="left:246px;top:429px;width:10px;height:1px;background:#1d3d5a;"></div>
<div style="left:246px;top:416px;width:10px;height:13px;background:#609c00;box-shadow:inset 0 0 0 1px #68aa00;"></div>
<div style="left:248px;top:417px;width:2px;height:11px;background:#588e00;"></div>
<div style="left:246px;top:414px;width:10px;height:2px;background:#a03a3a;"></div>
<div style="left:235px;top:412px;width:21px;height:2px;background:#1f6076;"></div>
<div style="left:235px;top:409.5px;width:21px;height:1.5px;background:#2684a2;"></div>
<div style="left:240px;top:409.5px;width:1px;height:1.5px;background:#26263a;"></div>
<div style="left:245px;top:409.5px;width:1px;height:1.5px;background:#26263a;"></div>
<div style="left:251px;top:409.5px;width:1px;height:1.5px;background:#26263a;"></div>
<div style="left:235px;top:399px;width:21px;height:10px;background:#f1f36a;"></div>
<div style="left:233px;top:472px;width:26px;height:71px;border:1px solid #525252;box-sizing:border-box;"></div>
<div style="left:234px;top:473px;width:23px;height:58px;background:#2c2c3a;"></div>
<div style="left:235px;top:526px;width:10px;height:4px;background:#1c586c;"></div>
<div style="left:235px;top:525px;width:10px;height:1px;background:#1d3d5a;"></div>
<div style="left:235px;top:512px;width:10px;height:13px;background:#609c00;box-shadow:inset 0 0 0 1px #68aa00;"></div>
<div style="left:237px;top:513px;width:2px;height:11px;background:#588e00;"></div>
<div style="left:235px;top:510px;width:10px;height:2px;background:#a03a3a;"></div>
<div style="left:235px;top:505px;width:10px;height:4px;background:#1c586c;"></div>
<div style="left:235px;top:504px;width:10px;height:1px;background:#1d3d5a;"></div>
<div style="left:235px;top:491px;width:10px;height:13px;background:#609c00;box-shadow:inset 0 0 0 1px #68aa00;"></div>
<div style="left:237px;top:492px;width:2px;height:11px;background:#588e00;"></div>
<div style="left:235px;top:489px;width:10px;height:2px;background:#a03a3a;"></div>
<div style="left:246px;top:526px;width:10px;height:4px;background:#1c586c;"></div>
<div style="left:246px;top:525px;width:10px;height:1px;background:#1d3d5a;"></div>
<div style="left:246px;top:512px;width:10px;height:13px;background:#609c00;box-shadow:inset 0 0 0 1px #68aa00;"></div>
<div style="left:248px;top:513px;width:2px;height:11px;background:#588e00;"></div>
<div style="left:246px;top:510px;width:10px;height:2px;background:#a03a3a;"></div>
<div style="left:246px;top:505px;width:10px;height:4px;background:#1c586c;"></div>
<div style="left:246px;top:504px;width:10px;height:1px;background:#1d3d5a;"></div>
<div style="left:246px;top:491px;width:10px;height:13px;background:#609c00;box-shadow:inset 0 0 0 1px #68aa00;"></div>
<div style="left:248px;top:492px;width:2px;height:11px;background:#588e00;"></div>
<div style="left:246px;top:489px;width:10px;height:2px;background:#a03a3a;"></div>
<div style="left:235px;top:487px;width:21px;height:2px;background:#1f6076;"></div>
<div style="left:235px;top:484.5px;width:21px;height:1.5px;background:#2684a2;"></div>
<div style="left:240px;top:484.5px;width:1px;height:1.5px;background:#26263a;"></div>
<div style="left:245px;top:484.5px;width:1px;height:1.5px;background:#26263a;"></div>
<div style="left:251px;top:484.5px;width:1px;height:1.5px;background:#26263a;"></div>
<div style="left:235px;top:474px;width:21px;height:10px;background:#f1f36a;"></div>
<div style="left:267px;top:395px;width:36px;height:166px;border:1px solid #525252;box-sizing:border-box;"></div>
<div style="left:272px;top:397px;width:26px;height:71px;border:1px solid #525252;box-sizing:border-box;"></div>
<div style="left:273px;top:398px;width:23px;height:58px;background:#2c2c3a;"></div>
<div style="left:274px;top:451px;width:10px;height:4px;background:#1c586c;"></div>
<div style="left:274px;top:450px;width:10px;height:1px;background:#1d3d5a;"></div>
<div style="left:274px;top:437px;width:10px;height:13px;background:#609c00;box-shadow:inset 0 0 0 1px #68aa00;"></div>
<div style="left:276px;top:438px;width:2px;height:11px;background:#588e00;"></div>
<div style="left:274px;top:435px;width:10px;height:2px;background:#a03a3a;"></div>
<div style="left:274px;top:430px;width:10px;height:4px;background:#1c586c;"></div>
<div style="left:274px;top:429px;width:10px;height:1px;background:#1d3d5a;"></div>
<div style="left:274px;top:416px;width:10px;height:13px;background:#609c00;box-shadow:inset 0 0 0 1px #68aa00;"></div>
<div style="left:276px;top:417px;width:2px;height:11px;background:#588e00;"></div>
<div style="left:274px;top:414px;width:10px;height:2px;background:#a03a3a;"></div>
<div style="left:285px;top:451px;width:10px;height:4px;background:#1c586c;"></div>
<div style="left:285px;top:450px;width:10px;height:1px;background:#1d3d5a;"></div>
<div style="left:285px;top:437px;width:10px;height:13px;background:#609c00;box-shadow:inset 0 0 0 1px #68aa00;"></div>
<div style="left:287px;top:438px;width:2px;height:11px;background:#588e00;"></div>
<div style="left:285px;top:435px;width:10px;height:2px;background:#a03a3a;"></div>
<div style="left:285px;top:430px;width:10px;height:4px;background:#1c586c;"></div>
<div style="left:285px;top:429px;width:10px;height:1px;background:#1d3d5a;"></div>
<div style="left:285px;top:416px;width:10px;height:13px;background:#609c00;box-shadow:inset 0 0 0 1px #68aa00;"></div>
<div style="left:287px;top:417px;width:2px;height:11px;background:#588e00;"></div>
<div style="left:285px;top:414px;width:10px;height:2px;background:#a03a3a;"></div>
<div style="left:274px;top:412px;width:21px;height:2px;background:#1f6076;"></div>
<div style="left:274px;top:409.5px;width:21px;height:1.5px;background:#2684a2;"></div>
<div style="left:279px;top:409.5px;width:1px;height:1.5px;background:#26263a;"></div>
<div style="left:284px;top:409.5px;width:1px;height:1.5px;background:#26263a;"></div>
<div style="left:290px;top:409.5px;width:1px;height:1.5px;background:#26263a;"></div>
<div style="left:274px;top:399px;width:21px;height:10px;background:#f1f36a;"></div>
<div style="left:272px;top:472px;width:26px;height:71px;border:1px solid #525252;box-sizing:border-box;"></div>
<div style="left:273px;top:473px;width:23px;height:58px;background:#2c2c3a;"></div>
<div style="left:274px;top:526px;width:10px;height:4px;background:#1c586c;"></div>
<div style="left:274px;top:525px;width:10px;height:1px;background:#1d3d5a;"></div>
<div style="left:274px;top:512px;width:10px;height:13px;background:#609c00;box-shadow:inset 0 0 0 1px #68aa00;"></div>
<div style="left:276px;top:513px;width:2px;height:11px;background:#588e00;"></div>
<div style="left:274px;top:510px;width:10px;height:2px;background:#a03a3a;"></div>
<div style="left:274px;top:505px;width:10px;height:4px;background:#1c586c;"></div>
<div style="left:274px;top:504px;width:10px;height:1px;background:#1d3d5a;"></div>
<div style="left:274px;top:491px;width:10px;height:13px;background:#609c00;box-shadow:inset 0 0 0 1px #68aa00;"></div>
<div style="left:276px;top:492px;width:2px;height:11px;background:#588e00;"></div>
<div style="left:274px;top:489px;width:10px;height:2px;background:#a03a3a;"></div>
<div style="left:285px;top:526px;width:10px;height:4px;background:#1c586c;"></div>
<div style="left:285px;top:525px;width:10px;height:1px;background:#1d3d5a;"></div>
<div style="left:285px;top:512px;width:10px;height:13px;background:#609c00;box-shadow:inset 0 0 0 1px #68aa00;"></div>
<div style="left:287px;top:513px;width:2px;height:11px;background:#588e00;"></div>
<div style="left:285px;top:510px;width:10px;height:2px;background:#a03a3a;"></div>
<div style="left:285px;top:505px;width:10px;height:4px;background:#1c586c;"></div>
<div style="left:285px;top:504px;width:10px;height:1px;background:#1d3d5a;"></div>
<div style="left:285px;top:491px;width:10px;height:13px;background:#609c00;box-shadow:inset 0 0 0 1px #68aa00;"></div>
<div style="left:287px;top:492px;width:2px;height:11px;background:#588e00;"></div>
<div style="left:285px;top:489px;width:10px;height:2px;background:#a03a3a;"></div>
<div style="left:274px;top:487px;width:21px;height:2px;background:#1f6076;"></div>
<div style="left:274px;top:484.5px;width:21px;height:1.5px;background:#2684a2;"></div>
<div style="left:279px;top:484.5px;width:1px;height:1.5px;background:#26263a;"></div>
<div style="left:284px;top:484.5px;width:1px;height:1.5px;background:#26263a;"></div>
<div style="left:290px;top:484.5px;width:1px;height:1.5px;background:#26263a;"></div>
<div style="left:274px;top:474px;width:21px;height:10px;background:#f1f36a;"></div>
<div style="left:306px;top:395px;width:36px;height:166px;border:1px solid #525252;box-sizing:border-box;"></div>
<div style="left:311px;top:397px;width:26px;height:71px;border:1px solid #525252;box-sizing:border-box;"></div>
<div style="left:312px;top:398px;width:23px;height:58px;background:#2c2c3a;"></div>
<div style="left:313px;top:451px;width:10px;height:4px;background:#1c586c;"></div>
<div style="left:313px;top:450px;width:10px;height:1px;background:#1d3d5a;"></div>
<div style="left:313px;top:437px;width:10px;height:13px;background:#609c00;box-shadow:inset 0 0 0 1px #68aa00;"></div>
<div style="left:315px;top:438px;width:2px;height:11px;background:#588e00;"></div>
<div style="left:313px;top:435px;width:10px;height:2px;background:#a03a3a;"></div>
<div style="left:313px;top:430px;width:10px;height:4px;background:#1c586c;"></div>
<div style="left:313px;top:429px;width:10px;height:1px;background:#1d3d5a;"></div>
<div style="left:313px;top:416px;width:10px;height:13px;background:#609c00;box-shadow:inset 0 0 0 1px #68aa00;"></div>
<div style="left:315px;top:417px;width:2px;height:11px;background:#588e00;"></div>
<div style="left:313px;top:414px;width:10px;height:2px;background:#a03a3a;"></div>
<div style="left:324px;top:451px;width:10px;height:4px;background:#1c586c;"></div>
<div style="left:324px;top:450px;width:10px;height:1px;background:#1d3d5a;"></div>
<div style="left:324px;top:437px;width:10px;height:13px;background:#609c00;box-shadow:inset 0 0 0 1px #68aa00;"></div>
<div style="left:326px;top:438px;width:2px;height:11px;background:#588e00;"></div>
<div style="left:324px;top:435px;width:10px;height:2px;background:#a03a3a;"></div>
<div style="left:324px;top:430px;width:10px;height:4px;background:#1c586c;"></div>
<div style="left:324px;top:429px;width:10px;height:1px;background:#1d3d5a;"></div>
<div style="left:324px;top:416px;width:10px;height:13px;background:#609c00;box-shadow:inset 0 0 0 1px #68aa00;"></div>
<div style="left:326px;top:417px;width:2px;height:11px;background:#588e00;"></div>
<div style="left:324px;top:414px;width:10px;height:2px;background:#a03a3a;"></div>
<div style="left:313px;top:412px;width:21px;height:2px;background:#1f6076;"></div>
<div style="left:313px;top:409.5px;width:21px;height:1.5px;background:#2684a2;"></div>
<div style="left:318px;top:409.5px;width:1px;height:1.5px;background:#26263a;"></div>
<div style="left:323px;top:409.5px;width:1px;height:1.5px;background:#26263a;"></div>
<div style="left:329px;top:409.5px;width:1px;height:1.5px;background:#26263a;"></div>
<div style="left:313px;top:399px;width:21px;height:10px;background:#f1f36a;"></div>
<div style="left:311px;top:472px;width:26px;height:71px;border:1px solid #525252;box-sizing:border-box;"></div>
<div style="left:312px;top:473px;width:23px;height:58px;background:#2c2c3a;"></div>
<div style="left:313px;top:526px;width:10px;height:4px;background:#1c586c;"></div>
<div style="left:313px;top:525px;width:10px;height:1px;background:#1d3d5a;"></div>
<div style="left:313px;top:512px;width:10px;height:13px;background:#609c00;box-shadow:inset 0 0 0 1px #68aa00;"></div>
<div style="left:315px;top:513px;width:2px;height:11px;background:#588e00;"></div>
<div style="left:313px;top:510px;width:10px;height:2px;background:#a03a3a;"></div>
<div style="left:313px;top:505px;width:10px;height:4px;background:#1c586c;"></div>
<div style="left:313px;top:504px;width:10px;height:1px;background:#1d3d5a;"></div>
<div style="left:313px;top:491px;width:10px;height:13px;background:#609c00;box-shadow:inset 0 0 0 1px #68aa00;"></div>
<div style="left:315px;top:492px;width:2px;height:11px;background:#588e00;"></div>
<div style="left:313px;top:489px;width:10px;height:2px;background:#a03a3a;"></div>
<div style="left:324px;top:526px;width:10px;height:4px;background:#1c586c;"></div>
<div style="left:324px;top:525px;width:10px;height:1px;background:#1d3d5a;"></div>
<div style="left:324px;top:512px;width:10px;height:13px;background:#609c00;box-shadow:inset 0 0 0 1px #68aa00;"></div>
<div style="left:326px;top:513px;width:2px;height:11px;background:#588e00;"></div>
<div style="left:324px;top:510px;width:10px;height:2px;background:#a03a3a;"></div>
<div style="left:324px;top:505px;width:10px;height:4px;background:#1c586c;"></div>
<div style="left:324px;top:504px;width:10px;height:1px;background:#1d3d5a;"></div>
<div style="left:324px;top:491px;width:10px;height:13px;background:#609c00;box-shadow:inset 0 0 0 1px #68aa00;"></div>
<div style="left:326px;top:492px;width:2px;height:11px;background:#588e00;"></div>
<div style="left:324px;top:489px;width:10px;height:2px;background:#a03a3a;"></div>
<div style="left:313px;top:487px;width:21px;height:2px;background:#1f6076;"></div>
<div style="left:313px;top:484.5px;width:21px;height:1.5px;background:#2684a2;"></div>
<div style="left:318px;top:484.5px;width:1px;height:1.5px;background:#26263a;"></div>
<div style="left:323px;top:484.5px;width:1px;height:1.5px;background:#26263a;"></div>
<div style="left:329px;top:484.5px;width:1px;height:1.5px;background:#26263a;"></div>
<div style="left:313px;top:474px;width:21px;height:10px;background:#f1f36a;"></div>
<div style="left:150px;top:563px;width:191px;height:12.5px;background:#1e5a6a;box-shadow:0 0 0 1px #2a2a2a;"></div>
<div style="left:350px;top:375px;width:203px;height:215px;background:#3e3e3e;border:1px solid #ececec;box-sizing:border-box;box-shadow:0 0 0 1px #121212, inset 0 0 0 1px #2c2c2c;"></div>
<div style="left:356px;top:382px;width:95px;height:10px;border:1px solid #525252;box-sizing:border-box;"></div>
<div style="left:453px;top:382px;width:95px;height:10px;border:1px solid #525252;box-sizing:border-box;"></div>
<div style="left:359px;top:385px;width:21px;height:4px;background:#1d5d72;"></div>
<div style="left:381px;top:385px;width:22px;height:4px;background:#1d5d72;"></div>
<div style="left:404px;top:385px;width:10px;height:4px;background:#1d5d72;"></div>
<div style="left:415px;top:385px;width:32px;height:4px;background:#1d5d72;"></div>
<div style="left:456px;top:385px;width:20px;height:4px;background:#1d5d72;"></div>
<div style="left:478px;top:385px;width:10px;height:4px;background:#1d5d72;"></div>
<div style="left:489px;top:385px;width:10px;height:4px;background:#1d5d72;"></div>
<div style="left:501px;top:385px;width:9px;height:4px;background:#1d5d72;"></div>
<div style="left:511px;top:385px;width:22px;height:4px;background:#1d5d72;"></div>
<div style="left:534px;top:385px;width:10px;height:4px;background:#1d5d72;"></div>
<div style="left:356px;top:395px;width:36px;height:166px;border:1px solid #525252;box-sizing:border-box;"></div>
<div style="left:361px;top:397px;width:26px;height:71px;border:1px solid #525252;box-sizing:border-box;"></div>
<div style="left:362px;top:398px;width:23px;height:58px;background:#2c2c3a;"></div>
<div style="left:363px;top:451px;width:10px;height:4px;background:#1c586c;"></div>
<div style="left:363px;top:450px;width:10px;height:1px;background:#1d3d5a;"></div>
<div style="left:363px;top:437px;width:10px;height:13px;background:#609c00;box-shadow:inset 0 0 0 1px #68aa00;"></div>
<div style="left:365px;top:438px;width:2px;height:11px;background:#588e00;"></div>
<div style="left:363px;top:435px;width:10px;height:2px;background:#a03a3a;"></div>
<div style="left:363px;top:430px;width:10px;height:4px;background:#1c586c;"></div>
<div style="left:363px;top:429px;width:10px;height:1px;background:#1d3d5a;"></div>
<div style="left:363px;top:416px;width:10px;height:13px;background:#609c00;box-shadow:inset 0 0 0 1px #68aa00;"></div>
<div style="left:365px;top:417px;width:2px;height:11px;background:#588e00;"></div>
<div style="left:363px;top:414px;width:10px;height:2px;background:#a03a3a;"></div>
<div style="left:374px;top:451px;width:10px;height:4px;background:#1c586c;"></div>
<div style="left:374px;top:450px;width:10px;height:1px;background:#1d3d5a;"></div>
<div style="left:374px;top:437px;width:10px;height:13px;background:#609c00;box-shadow:inset 0 0 0 1px #68aa00;"></div>
<div style="left:376px;top:438px;width:2px;height:11px;background:#588e00;"></div>
<div style="left:374px;top:435px;width:10px;height:2px;background:#a03a3a;"></div>
<div style="left:374px;top:430px;width:10px;height:4px;background:#1c586c;"></div>
<div style="left:374px;top:429px;width:10px;height:1px;background:#1d3d5a;"></div>
<div style="left:374px;top:416px;width:10px;height:13px;background:#609c00;box-shadow:inset 0 0 0 1px #68aa00;"></div>
<div style="left:376px;top:417px;width:2px;height:11px;background:#588e00;"></div>
<div style="left:374px;top:414px;width:10px;height:2px;background:#a03a3a;"></div>
<div style="left:363px;top:412px;width:21px;height:2px;background:#1f6076;"></div>
<div style="left:363px;top:409.5px;width:21px;height:1.5px;background:#2684a2;"></div>
<div style="left:368px;top:409.5px;width:1px;height:1.5px;background:#26263a;"></div>
<div style="left:373px;top:409.5px;width:1px;height:1.5px;background:#26263a;"></div>
<div style="left:379px;top:409.5px;width:1px;height:1.5px;background:#26263a;"></div>
<div style="left:363px;top:399px;width:21px;height:10px;background:#f1f36a;"></div>
<div style="left:361px;top:472px;width:26px;height:71px;border:1px solid #525252;box-sizing:border-box;"></div>
<div style="left:362px;top:473px;width:23px;height:58px;background:#2c2c3a;"></div>
<div style="left:363px;top:526px;width:10px;height:4px;background:#1c586c;"></div>
<div style="left:363px;top:525px;width:10px;height:1px;background:#1d3d5a;"></div>
<div style="left:363px;top:512px;width:10px;height:13px;background:#609c00;box-shadow:inset 0 0 0 1px #68aa00;"></div>
<div style="left:365px;top:513px;width:2px;height:11px;background:#588e00;"></div>
<div style="left:363px;top:510px;width:10px;height:2px;background:#a03a3a;"></div>
<div style="left:363px;top:505px;width:10px;height:4px;background:#1c586c;"></div>
<div style="left:363px;top:504px;width:10px;height:1px;background:#1d3d5a;"></div>
<div style="left:363px;top:491px;width:10px;height:13px;background:#609c00;box-shadow:inset 0 0 0 1px #68aa00;"></div>
<div style="left:365px;top:492px;width:2px;height:11px;background:#588e00;"></div>
<div style="left:363px;top:489px;width:10px;height:2px;background:#a03a3a;"></div>
<div style="left:374px;top:526px;width:10px;height:4px;background:#1c586c;"></div>
<div style="left:374px;top:525px;width:10px;height:1px;background:#1d3d5a;"></div>
<div style="left:374px;top:512px;width:10px;height:13px;background:#609c00;box-shadow:inset 0 0 0 1px #68aa00;"></div>
<div style="left:376px;top:513px;width:2px;height:11px;background:#588e00;"></div>
<div style="left:374px;top:510px;width:10px;height:2px;background:#a03a3a;"></div>
<div style="left:374px;top:505px;width:10px;height:4px;background:#1c586c;"></div>
<div style="left:374px;top:504px;width:10px;height:1px;background:#1d3d5a;"></div>
<div style="left:374px;top:491px;width:10px;height:13px;background:#609c00;box-shadow:inset 0 0 0 1px #68aa00;"></div>
<div style="left:376px;top:492px;width:2px;height:11px;background:#588e00;"></div>
<div style="left:374px;top:489px;width:10px;height:2px;background:#a03a3a;"></div>
<div style="left:363px;top:487px;width:21px;height:2px;background:#1f6076;"></div>
<div style="left:363px;top:484.5px;width:21px;height:1.5px;background:#2684a2;"></div>
<div style="left:368px;top:484.5px;width:1px;height:1.5px;background:#26263a;"></div>
<div style="left:373px;top:484.5px;width:1px;height:1.5px;background:#26263a;"></div>
<div style="left:379px;top:484.5px;width:1px;height:1.5px;background:#26263a;"></div>
<div style="left:363px;top:474px;width:21px;height:10px;background:#f1f36a;"></div>
<div style="left:395px;top:395px;width:36px;height:166px;border:1px solid #525252;box-sizing:border-box;"></div>
<div style="left:400px;top:397px;width:26px;height:71px;border:1px solid #525252;box-sizing:border-box;"></div>
<div style="left:401px;top:398px;width:23px;height:58px;background:#2c2c3a;"></div>
<div style="left:402px;top:451px;width:10px;height:4px;background:#1c586c;"></div>
<div style="left:402px;top:450px;width:10px;height:1px;background:#1d3d5a;"></div>
<div style="left:402px;top:437px;width:10px;height:13px;background:#609c00;box-shadow:inset 0 0 0 1px #68aa00;"></div>
<div style="left:404px;top:438px;width:2px;height:11px;background:#588e00;"></div>
<div style="left:402px;top:435px;width:10px;height:2px;background:#a03a3a;"></div>
<div style="left:402px;top:430px;width:10px;height:4px;background:#1c586c;"></div>
<div style="left:402px;top:429px;width:10px;height:1px;background:#1d3d5a;"></div>
<div style="left:402px;top:416px;width:10px;height:13px;background:#609c00;box-shadow:inset 0 0 0 1px #68aa00;"></div>
<div style="left:404px;top:417px;width:2px;height:11px;background:#588e00;"></div>
<div style="left:402px;top:414px;width:10px;height:2px;background:#a03a3a;"></div>
<div style="left:413px;top:451px;width:10px;height:4px;background:#1c586c;"></div>
<div style="left:413px;top:450px;width:10px;height:1px;background:#1d3d5a;"></div>
<div style="left:413px;top:437px;width:10px;height:13px;background:#609c00;box-shadow:inset 0 0 0 1px #68aa00;"></div>
<div style="left:415px;top:438px;width:2px;height:11px;background:#588e00;"></div>
<div style="left:413px;top:435px;width:10px;height:2px;background:#a03a3a;"></div>
<div style="left:413px;top:430px;width:10px;height:4px;background:#1c586c;"></div>
<div style="left:413px;top:429px;width:10px;height:1px;background:#1d3d5a;"></div>
<div style="left:413px;top:416px;width:10px;height:13px;background:#609c00;box-shadow:inset 0 0 0 1px #68aa00;"></div>
<div style="left:415px;top:417px;width:2px;height:11px;background:#588e00;"></div>
<div style="left:413px;top:414px;width:10px;height:2px;background:#a03a3a;"></div>
<div style="left:402px;top:412px;width:21px;height:2px;background:#1f6076;"></div>
<div style="left:402px;top:409.5px;width:21px;height:1.5px;background:#2684a2;"></div>
<div style="left:407px;top:409.5px;width:1px;height:1.5px;background:#26263a;"></div>
<div style="left:412px;top:409.5px;width:1px;height:1.5px;background:#26263a;"></div>
<div style="left:418px;top:409.5px;width:1px;height:1.5px;background:#26263a;"></div>
<div style="left:402px;top:399px;width:21px;height:10px;background:#f1f36a;"></div>
<div style="left:400px;top:472px;width:26px;height:71px;border:1px solid #525252;box-sizing:border-box;"></div>
<div style="left:401px;top:473px;width:23px;height:58px;background:#2c2c3a;"></div>
<div style="left:402px;top:526px;width:10px;height:4px;background:#1c586c;"></div>
<div style="left:402px;top:525px;width:10px;height:1px;background:#1d3d5a;"></div>
<div style="left:402px;top:512px;width:10px;height:13px;background:#609c00;box-shadow:inset 0 0 0 1px #68aa00;"></div>
<div style="left:404px;top:513px;width:2px;height:11px;background:#588e00;"></div>
<div style="left:402px;top:510px;width:10px;height:2px;background:#a03a3a;"></div>
<div style="left:402px;top:505px;width:10px;height:4px;background:#1c586c;"></div>
<div style="left:402px;top:504px;width:10px;height:1px;background:#1d3d5a;"></div>
<div style="left:402px;top:491px;width:10px;height:13px;background:#609c00;box-shadow:inset 0 0 0 1px #68aa00;"></div>
<div style="left:404px;top:492px;width:2px;height:11px;background:#588e00;"></div>
<div style="left:402px;top:489px;width:10px;height:2px;background:#a03a3a;"></div>
<div style="left:413px;top:526px;width:10px;height:4px;background:#1c586c;"></div>
<div style="left:413px;top:525px;width:10px;height:1px;background:#1d3d5a;"></div>
<div style="left:413px;top:512px;width:10px;height:13px;background:#609c00;box-shadow:inset 0 0 0 1px #68aa00;"></div>
<div style="left:415px;top:513px;width:2px;height:11px;background:#588e00;"></div>
<div style="left:413px;top:510px;width:10px;height:2px;background:#a03a3a;"></div>
<div style="left:413px;top:505px;width:10px;height:4px;background:#1c586c;"></div>
<div style="left:413px;top:504px;width:10px;height:1px;background:#1d3d5a;"></div>
<div style="left:413px;top:491px;width:10px;height:13px;background:#609c00;box-shadow:inset 0 0 0 1px #68aa00;"></div>
<div style="left:415px;top:492px;width:2px;height:11px;background:#588e00;"></div>
<div style="left:413px;top:489px;width:10px;height:2px;background:#a03a3a;"></div>
<div style="left:402px;top:487px;width:21px;height:2px;background:#1f6076;"></div>
<div style="left:402px;top:484.5px;width:21px;height:1.5px;background:#2684a2;"></div>
<div style="left:407px;top:484.5px;width:1px;height:1.5px;background:#26263a;"></div>
<div style="left:412px;top:484.5px;width:1px;height:1.5px;background:#26263a;"></div>
<div style="left:418px;top:484.5px;width:1px;height:1.5px;background:#26263a;"></div>
<div style="left:402px;top:474px;width:21px;height:10px;background:#f1f36a;"></div>
<div style="left:434px;top:395px;width:36px;height:166px;border:1px solid #525252;box-sizing:border-box;"></div>
<div style="left:439px;top:397px;width:26px;height:71px;border:1px solid #525252;box-sizing:border-box;"></div>
<div style="left:440px;top:398px;width:23px;height:58px;background:#2c2c3a;"></div>
<div style="left:441px;top:451px;width:10px;height:4px;background:#1c586c;"></div>
<div style="left:441px;top:450px;width:10px;height:1px;background:#1d3d5a;"></div>
<div style="left:441px;top:437px;width:10px;height:13px;background:#609c00;box-shadow:inset 0 0 0 1px #68aa00;"></div>
<div style="left:443px;top:438px;width:2px;height:11px;background:#588e00;"></div>
<div style="left:441px;top:435px;width:10px;height:2px;background:#a03a3a;"></div>
<div style="left:441px;top:430px;width:10px;height:4px;background:#1c586c;"></div>
<div style="left:441px;top:429px;width:10px;height:1px;background:#1d3d5a;"></div>
<div style="left:441px;top:416px;width:10px;height:13px;background:#609c00;box-shadow:inset 0 0 0 1px #68aa00;"></div>
<div style="left:443px;top:417px;width:2px;height:11px;background:#588e00;"></div>
<div style="left:441px;top:414px;width:10px;height:2px;background:#a03a3a;"></div>
<div style="left:452px;top:451px;width:10px;height:4px;background:#1c586c;"></div>
<div style="left:452px;top:450px;width:10px;height:1px;background:#1d3d5a;"></div>
<div style="left:452px;top:437px;width:10px;height:13px;background:#609c00;box-shadow:inset 0 0 0 1px #68aa00;"></div>
<div style="left:454px;top:438px;width:2px;height:11px;background:#588e00;"></div>
<div style="left:452px;top:435px;width:10px;height:2px;background:#a03a3a;"></div>
<div style="left:452px;top:430px;width:10px;height:4px;background:#1c586c;"></div>
<div style="left:452px;top:429px;width:10px;height:1px;background:#1d3d5a;"></div>
<div style="left:452px;top:416px;width:10px;height:13px;background:#609c00;box-shadow:inset 0 0 0 1px #68aa00;"></div>
<div style="left:454px;top:417px;width:2px;height:11px;background:#588e00;"></div>
<div style="left:452px;top:414px;width:10px;height:2px;background:#a03a3a;"></div>
<div style="left:441px;top:412px;width:21px;height:2px;background:#1f6076;"></div>
<div style="left:441px;top:409.5px;width:21px;height:1.5px;background:#2684a2;"></div>
<div style="left:446px;top:409.5px;width:1px;height:1.5px;background:#26263a;"></div>
<div style="left:451px;top:409.5px;width:1px;height:1.5px;background:#26263a;"></div>
<div style="left:457px;top:409.5px;width:1px;height:1.5px;background:#26263a;"></div>
<div style="left:441px;top:399px;width:21px;height:10px;background:#f1f36a;"></div>
<div style="left:439px;top:472px;width:26px;height:71px;border:1px solid #525252;box-sizing:border-box;"></div>
<div style="left:440px;top:473px;width:23px;height:58px;background:#2c2c3a;"></div>
<div style="left:441px;top:526px;width:10px;height:4px;background:#1c586c;"></div>
<div style="left:441px;top:525px;width:10px;height:1px;background:#1d3d5a;"></div>
<div style="left:441px;top:512px;width:10px;height:13px;background:#609c00;box-shadow:inset 0 0 0 1px #68aa00;"></div>
<div style="left:443px;top:513px;width:2px;height:11px;background:#588e00;"></div>
<div style="left:441px;top:510px;width:10px;height:2px;background:#a03a3a;"></div>
<div style="left:441px;top:505px;width:10px;height:4px;background:#1c586c;"></div>
<div style="left:441px;top:504px;width:10px;height:1px;background:#1d3d5a;"></div>
<div style="left:441px;top:491px;width:10px;height:13px;background:#609c00;box-shadow:inset 0 0 0 1px #68aa00;"></div>
<div style="left:443px;top:492px;width:2px;height:11px;background:#588e00;"></div>
<div style="left:441px;top:489px;width:10px;height:2px;background:#a03a3a;"></div>
<div style="left:452px;top:526px;width:10px;height:4px;background:#1c586c;"></div>
<div style="left:452px;top:525px;width:10px;height:1px;background:#1d3d5a;"></div>
<div style="left:452px;top:512px;width:10px;height:13px;background:#609c00;box-shadow:inset 0 0 0 1px #68aa00;"></div>
<div style="left:454px;top:513px;width:2px;height:11px;background:#588e00;"></div>
<div style="left:452px;top:510px;width:10px;height:2px;background:#a03a3a;"></div>
<div style="left:452px;top:505px;width:10px;height:4px;background:#1c586c;"></div>
<div style="left:452px;top:504px;width:10px;height:1px;background:#1d3d5a;"></div>
<div style="left:452px;top:491px;width:10px;height:13px;background:#609c00;box-shadow:inset 0 0 0 1px #68aa00;"></div>
<div style="left:454px;top:492px;width:2px;height:11px;background:#588e00;"></div>
<div style="left:452px;top:489px;width:10px;height:2px;background:#a03a3a;"></div>
<div style="left:441px;top:487px;width:21px;height:2px;background:#1f6076;"></div>
<div style="left:441px;top:484.5px;width:21px;height:1.5px;background:#2684a2;"></div>
<div style="left:446px;top:484.5px;width:1px;height:1.5px;background:#26263a;"></div>
<div style="left:451px;top:484.5px;width:1px;height:1.5px;background:#26263a;"></div>
<div style="left:457px;top:484.5px;width:1px;height:1.5px;background:#26263a;"></div>
<div style="left:441px;top:474px;width:21px;height:10px;background:#f1f36a;"></div>
<div style="left:473px;top:395px;width:36px;height:166px;border:1px solid #525252;box-sizing:border-box;"></div>
<div style="left:478px;top:397px;width:26px;height:71px;border:1px solid #525252;box-sizing:border-box;"></div>
<div style="left:479px;top:398px;width:23px;height:58px;background:#2c2c3a;"></div>
<div style="left:480px;top:451px;width:10px;height:4px;background:#1c586c;"></div>
<div style="left:480px;top:450px;width:10px;height:1px;background:#1d3d5a;"></div>
<div style="left:480px;top:437px;width:10px;height:13px;background:#609c00;box-shadow:inset 0 0 0 1px #68aa00;"></div>
<div style="left:482px;top:438px;width:2px;height:11px;background:#588e00;"></div>
<div style="left:480px;top:435px;width:10px;height:2px;background:#a03a3a;"></div>
<div style="left:480px;top:430px;width:10px;height:4px;background:#1c586c;"></div>
<div style="left:480px;top:429px;width:10px;height:1px;background:#1d3d5a;"></div>
<div style="left:480px;top:416px;width:10px;height:13px;background:#609c00;box-shadow:inset 0 0 0 1px #68aa00;"></div>
<div style="left:482px;top:417px;width:2px;height:11px;background:#588e00;"></div>
<div style="left:480px;top:414px;width:10px;height:2px;background:#a03a3a;"></div>
<div style="left:491px;top:451px;width:10px;height:4px;background:#1c586c;"></div>
<div style="left:491px;top:450px;width:10px;height:1px;background:#1d3d5a;"></div>
<div style="left:491px;top:437px;width:10px;height:13px;background:#609c00;box-shadow:inset 0 0 0 1px #68aa00;"></div>
<div style="left:493px;top:438px;width:2px;height:11px;background:#588e00;"></div>
<div style="left:491px;top:435px;width:10px;height:2px;background:#a03a3a;"></div>
<div style="left:491px;top:430px;width:10px;height:4px;background:#1c586c;"></div>
<div style="left:491px;top:429px;width:10px;height:1px;background:#1d3d5a;"></div>
<div style="left:491px;top:416px;width:10px;height:13px;background:#609c00;box-shadow:inset 0 0 0 1px #68aa00;"></div>
<div style="left:493px;top:417px;width:2px;height:11px;background:#588e00;"></div>
<div style="left:491px;top:414px;width:10px;height:2px;background:#a03a3a;"></div>
<div style="left:480px;top:412px;width:21px;height:2px;background:#1f6076;"></div>
<div style="left:480px;top:409.5px;width:21px;height:1.5px;background:#2684a2;"></div>
<div style="left:485px;top:409.5px;width:1px;height:1.5px;background:#26263a;"></div>
<div style="left:490px;top:409.5px;width:1px;height:1.5px;background:#26263a;"></div>
<div style="left:496px;top:409.5px;width:1px;height:1.5px;background:#26263a;"></div>
<div style="left:480px;top:399px;width:21px;height:10px;background:#f1f36a;"></div>
<div style="left:478px;top:472px;width:26px;height:71px;border:1px solid #525252;box-sizing:border-box;"></div>
<div style="left:479px;top:473px;width:23px;height:58px;background:#2c2c3a;"></div>
<div style="left:480px;top:526px;width:10px;height:4px;background:#1c586c;"></div>
<div style="left:480px;top:525px;width:10px;height:1px;background:#1d3d5a;"></div>
<div style="left:480px;top:512px;width:10px;height:13px;background:#609c00;box-shadow:inset 0 0 0 1px #68aa00;"></div>
<div style="left:482px;top:513px;width:2px;height:11px;background:#588e00;"></div>
<div style="left:480px;top:510px;width:10px;height:2px;background:#a03a3a;"></div>
<div style="left:480px;top:505px;width:10px;height:4px;background:#1c586c;"></div>
<div style="left:480px;top:504px;width:10px;height:1px;background:#1d3d5a;"></div>
<div style="left:480px;top:491px;width:10px;height:13px;background:#609c00;box-shadow:inset 0 0 0 1px #68aa00;"></div>
<div style="left:482px;top:492px;width:2px;height:11px;background:#588e00;"></div>
<div style="left:480px;top:489px;width:10px;height:2px;background:#a03a3a;"></div>
<div style="left:491px;top:526px;width:10px;height:4px;background:#1c586c;"></div>
<div style="left:491px;top:525px;width:10px;height:1px;background:#1d3d5a;"></div>
<div style="left:491px;top:512px;width:10px;height:13px;background:#609c00;box-shadow:inset 0 0 0 1px #68aa00;"></div>
<div style="left:493px;top:513px;width:2px;height:11px;background:#588e00;"></div>
<div style="left:491px;top:510px;width:10px;height:2px;background:#a03a3a;"></div>
<div style="left:491px;top:505px;width:10px;height:4px;background:#1c586c;"></div>
<div style="left:491px;top:504px;width:10px;height:1px;background:#1d3d5a;"></div>
<div style="left:491px;top:491px;width:10px;height:13px;background:#609c00;box-shadow:inset 0 0 0 1px #68aa00;"></div>
<div style="left:493px;top:492px;width:2px;height:11px;background:#588e00;"></div>
<div style="left:491px;top:489px;width:10px;height:2px;background:#a03a3a;"></div>
<div style="left:480px;top:487px;width:21px;height:2px;background:#1f6076;"></div>
<div style="left:480px;top:484.5px;width:21px;height:1.5px;background:#2684a2;"></div>
<div style="left:485px;top:484.5px;width:1px;height:1.5px;background:#26263a;"></div>
<div style="left:490px;top:484.5px;width:1px;height:1.5px;background:#26263a;"></div>
<div style="left:496px;top:484.5px;width:1px;height:1.5px;background:#26263a;"></div>
<div style="left:480px;top:474px;width:21px;height:10px;background:#f1f36a;"></div>
<div style="left:512px;top:395px;width:36px;height:166px;border:1px solid #525252;box-sizing:border-box;"></div>
<div style="left:517px;top:397px;width:26px;height:71px;border:1px solid #525252;box-sizing:border-box;"></div>
<div style="left:518px;top:398px;width:23px;height:58px;background:#2c2c3a;"></div>
<div style="left:519px;top:451px;width:10px;height:4px;background:#1c586c;"></div>
<div style="left:519px;top:450px;width:10px;height:1px;background:#1d3d5a;"></div>
<div style="left:519px;top:437px;width:10px;height:13px;background:#609c00;box-shadow:inset 0 0 0 1px #68aa00;"></div>
<div style="left:521px;top:438px;width:2px;height:11px;background:#588e00;"></div>
<div style="left:519px;top:435px;width:10px;height:2px;background:#a03a3a;"></div>
<div style="left:519px;top:430px;width:10px;height:4px;background:#1c586c;"></div>
<div style="left:519px;top:429px;width:10px;height:1px;background:#1d3d5a;"></div>
<div style="left:519px;top:416px;width:10px;height:13px;background:#609c00;box-shadow:inset 0 0 0 1px #68aa00;"></div>
<div style="left:521px;top:417px;width:2px;height:11px;background:#588e00;"></div>
<div style="left:519px;top:414px;width:10px;height:2px;background:#a03a3a;"></div>
<div style="left:530px;top:451px;width:10px;height:4px;background:#1c586c;"></div>
<div style="left:530px;top:450px;width:10px;height:1px;background:#1d3d5a;"></div>
<div style="left:530px;top:437px;width:10px;height:13px;background:#609c00;box-shadow:inset 0 0 0 1px #68aa00;"></div>
<div style="left:532px;top:438px;width:2px;height:11px;background:#588e00;"></div>
<div style="left:530px;top:435px;width:10px;height:2px;background:#a03a3a;"></div>
<div style="left:530px;top:430px;width:10px;height:4px;background:#1c586c;"></div>
<div style="left:530px;top:429px;width:10px;height:1px;background:#1d3d5a;"></div>
<div style="left:530px;top:416px;width:10px;height:13px;background:#609c00;box-shadow:inset 0 0 0 1px #68aa00;"></div>
<div style="left:532px;top:417px;width:2px;height:11px;background:#588e00;"></div>
<div style="left:530px;top:414px;width:10px;height:2px;background:#a03a3a;"></div>
<div style="left:519px;top:412px;width:21px;height:2px;background:#1f6076;"></div>
<div style="left:519px;top:409.5px;width:21px;height:1.5px;background:#2684a2;"></div>
<div style="left:524px;top:409.5px;width:1px;height:1.5px;background:#26263a;"></div>
<div style="left:529px;top:409.5px;width:1px;height:1.5px;background:#26263a;"></div>
<div style="left:535px;top:409.5px;width:1px;height:1.5px;background:#26263a;"></div>
<div style="left:519px;top:399px;width:21px;height:10px;background:#f1f36a;"></div>
<div style="left:517px;top:472px;width:26px;height:71px;border:1px solid #525252;box-sizing:border-box;"></div>
<div style="left:518px;top:473px;width:23px;height:58px;background:#2c2c3a;"></div>
<div style="left:519px;top:526px;width:10px;height:4px;background:#1c586c;"></div>
<div style="left:519px;top:525px;width:10px;height:1px;background:#1d3d5a;"></div>
<div style="left:519px;top:512px;width:10px;height:13px;background:#609c00;box-shadow:inset 0 0 0 1px #68aa00;"></div>
<div style="left:521px;top:513px;width:2px;height:11px;background:#588e00;"></div>
<div style="left:519px;top:510px;width:10px;height:2px;background:#a03a3a;"></div>
<div style="left:519px;top:505px;width:10px;height:4px;background:#1c586c;"></div>
<div style="left:519px;top:504px;width:10px;height:1px;background:#1d3d5a;"></div>
<div style="left:519px;top:491px;width:10px;height:13px;background:#609c00;box-shadow:inset 0 0 0 1px #68aa00;"></div>
<div style="left:521px;top:492px;width:2px;height:11px;background:#588e00;"></div>
<div style="left:519px;top:489px;width:10px;height:2px;background:#a03a3a;"></div>
<div style="left:530px;top:526px;width:10px;height:4px;background:#1c586c;"></div>
<div style="left:530px;top:525px;width:10px;height:1px;background:#1d3d5a;"></div>
<div style="left:530px;top:512px;width:10px;height:13px;background:#609c00;box-shadow:inset 0 0 0 1px #68aa00;"></div>
<div style="left:532px;top:513px;width:2px;height:11px;background:#588e00;"></div>
<div style="left:530px;top:510px;width:10px;height:2px;background:#a03a3a;"></div>
<div style="left:530px;top:505px;width:10px;height:4px;background:#1c586c;"></div>
<div style="left:530px;top:504px;width:10px;height:1px;background:#1d3d5a;"></div>
<div style="left:530px;top:491px;width:10px;height:13px;background:#609c00;box-shadow:inset 0 0 0 1px #68aa00;"></div>
<div style="left:532px;top:492px;width:2px;height:11px;background:#588e00;"></div>
<div style="left:530px;top:489px;width:10px;height:2px;background:#a03a3a;"></div>
<div style="left:519px;top:487px;width:21px;height:2px;background:#1f6076;"></div>
<div style="left:519px;top:484.5px;width:21px;height:1.5px;background:#2684a2;"></div>
<div style="left:524px;top:484.5px;width:1px;height:1.5px;background:#26263a;"></div>
<div style="left:529px;top:484.5px;width:1px;height:1.5px;background:#26263a;"></div>
<div style="left:535px;top:484.5px;width:1px;height:1.5px;background:#26263a;"></div>
<div style="left:519px;top:474px;width:21px;height:10px;background:#f1f36a;"></div>
<div style="left:512px;top:395px;width:36px;height:166px;background:rgba(26,26,26,0.83);"></div>
<div style="left:356px;top:563px;width:191px;height:12.5px;background:#1e5a6a;box-shadow:0 0 0 1px #2a2a2a;"></div>
<svg width="698" height="600" viewBox="0 0 698 600">
<text x="262.31" y="19.70" font-size="10.725" font-weight="normal" fill="#f2f2f2" textLength="153.53" lengthAdjust="spacingAndGlyphs" stroke="#000" stroke-opacity="0.55" stroke-width="1.3">PCI Express 5.0 Host Interface</text>
<text x="262.31" y="19.70" font-size="10.725" font-weight="normal" fill="#f2f2f2" textLength="153.53" lengthAdjust="spacingAndGlyphs" stroke="#f2f2f2" stroke-width="0.5">PCI Express 5.0 Host Interface</text>
<text x="80.00" y="39.70" font-size="10.435" font-weight="normal" fill="#161616" textLength="167.43" lengthAdjust="spacingAndGlyphs" stroke="#161616" stroke-width="0.7">AI-Management Processor (AMP)</text>
<text x="471.16" y="39.70" font-size="10.435" font-weight="normal" fill="#161616" textLength="94.51" lengthAdjust="spacingAndGlyphs" stroke="#161616" stroke-width="0.45">GigaThread Engine</text>
<text x="98.04" y="58.60" font-size="10.580" font-weight="normal" fill="#f2f2f2" textLength="99.74" lengthAdjust="spacingAndGlyphs" stroke="#000" stroke-opacity="0.55" stroke-width="1.3">Optical Flow Engine</text>
<text x="98.04" y="58.60" font-size="10.580" font-weight="normal" fill="#f2f2f2" textLength="99.74" lengthAdjust="spacingAndGlyphs" stroke="#f2f2f2" stroke-width="0.5">Optical Flow Engine</text>
<text x="348.66" y="58.60" font-size="10.580" font-weight="normal" fill="#f2f2f2" textLength="36.66" lengthAdjust="spacingAndGlyphs" stroke="#000" stroke-opacity="0.55" stroke-width="1.3">NVENC</text>
<text x="348.66" y="58.60" font-size="10.580" font-weight="normal" fill="#f2f2f2" textLength="36.66" lengthAdjust="spacingAndGlyphs" stroke="#f2f2f2" stroke-width="0.5">NVENC</text>
<text x="563.76" y="58.60" font-size="10.580" font-weight="normal" fill="#f2f2f2" textLength="36.77" lengthAdjust="spacingAndGlyphs" stroke="#000" stroke-opacity="0.55" stroke-width="1.3">NVDEC</text>
<text x="563.76" y="58.60" font-size="10.580" font-weight="normal" fill="#f2f2f2" textLength="36.77" lengthAdjust="spacingAndGlyphs" stroke="#f2f2f2" stroke-width="0.5">NVDEC</text>
<text transform="translate(22.20,176.84) rotate(-90)" x="0" y="0" font-size="10.000" font-weight="normal" fill="#eeeeee" textLength="38.11" lengthAdjust="spacingAndGlyphs" stroke="#000" stroke-opacity="0.5" stroke-width="1.3">Memory</text>
<text transform="translate(22.20,176.84) rotate(-90)" x="0" y="0" font-size="10.000" font-weight="normal" fill="#eeeeee" textLength="38.11" lengthAdjust="spacingAndGlyphs" stroke="#eeeeee" stroke-width="0.15">Memory</text>
<text transform="translate(34.00,180.53) rotate(-90)" x="0" y="0" font-size="10.145" font-weight="normal" fill="#eeeeee" textLength="45.69" lengthAdjust="spacingAndGlyphs" stroke="#000" stroke-opacity="0.5" stroke-width="1.3">Controller</text>
<text transform="translate(34.00,180.53) rotate(-90)" x="0" y="0" font-size="10.145" font-weight="normal" fill="#eeeeee" textLength="45.69" lengthAdjust="spacingAndGlyphs" stroke="#eeeeee" stroke-width="0.15">Controller</text>
<text transform="translate(678.00,138.92) rotate(90)" x="0" y="0" font-size="9.710" font-weight="normal" fill="#eeeeee" textLength="37.60" lengthAdjust="spacingAndGlyphs" stroke="#000" stroke-opacity="0.5" stroke-width="1.3">Memory</text>
<text transform="translate(678.00,138.92) rotate(90)" x="0" y="0" font-size="9.710" font-weight="normal" fill="#eeeeee" textLength="37.60" lengthAdjust="spacingAndGlyphs" stroke="#eeeeee" stroke-width="0.15">Memory</text>
<text transform="translate(667.20,134.47) rotate(90)" x="0" y="0" font-size="10.290" font-weight="normal" fill="#eeeeee" textLength="45.94" lengthAdjust="spacingAndGlyphs" stroke="#000" stroke-opacity="0.5" stroke-width="1.3">Controller</text>
<text transform="translate(667.20,134.47) rotate(90)" x="0" y="0" font-size="10.290" font-weight="normal" fill="#eeeeee" textLength="45.94" lengthAdjust="spacingAndGlyphs" stroke="#eeeeee" stroke-width="0.15">Controller</text>
<text transform="translate(22.20,349.84) rotate(-90)" x="0" y="0" font-size="10.000" font-weight="normal" fill="#eeeeee" textLength="38.11" lengthAdjust="spacingAndGlyphs" stroke="#000" stroke-opacity="0.5" stroke-width="1.3">Memory</text>
<text transform="translate(22.20,349.84) rotate(-90)" x="0" y="0" font-size="10.000" font-weight="normal" fill="#eeeeee" textLength="38.11" lengthAdjust="spacingAndGlyphs" stroke="#eeeeee" stroke-width="0.15">Memory</text>
<text transform="translate(34.00,353.53) rotate(-90)" x="0" y="0" font-size="10.145" font-weight="normal" fill="#eeeeee" textLength="45.69" lengthAdjust="spacingAndGlyphs" stroke="#000" stroke-opacity="0.5" stroke-width="1.3">Controller</text>
<text transform="translate(34.00,353.53) rotate(-90)" x="0" y="0" font-size="10.145" font-weight="normal" fill="#eeeeee" textLength="45.69" lengthAdjust="spacingAndGlyphs" stroke="#eeeeee" stroke-width="0.15">Controller</text>
<text transform="translate(678.00,311.92) rotate(90)" x="0" y="0" font-size="9.710" font-weight="normal" fill="#eeeeee" textLength="37.60" lengthAdjust="spacingAndGlyphs" stroke="#000" stroke-opacity="0.5" stroke-width="1.3">Memory</text>
<text transform="translate(678.00,311.92) rotate(90)" x="0" y="0" font-size="9.710" font-weight="normal" fill="#eeeeee" textLength="37.60" lengthAdjust="spacingAndGlyphs" stroke="#eeeeee" stroke-width="0.15">Memory</text>
<text transform="translate(667.20,307.47) rotate(90)" x="0" y="0" font-size="10.290" font-weight="normal" fill="#eeeeee" textLength="45.94" lengthAdjust="spacingAndGlyphs" stroke="#000" stroke-opacity="0.5" stroke-width="1.3">Controller</text>
<text transform="translate(667.20,307.47) rotate(90)" x="0" y="0" font-size="10.290" font-weight="normal" fill="#eeeeee" textLength="45.94" lengthAdjust="spacingAndGlyphs" stroke="#eeeeee" stroke-width="0.15">Controller</text>
<text transform="translate(22.20,523.84) rotate(-90)" x="0" y="0" font-size="10.000" font-weight="normal" fill="#eeeeee" textLength="38.11" lengthAdjust="spacingAndGlyphs" stroke="#000" stroke-opacity="0.5" stroke-width="1.3">Memory</text>
<text transform="translate(22.20,523.84) rotate(-90)" x="0" y="0" font-size="10.000" font-weight="normal" fill="#eeeeee" textLength="38.11" lengthAdjust="spacingAndGlyphs" stroke="#eeeeee" stroke-width="0.15">Memory</text>
<text transform="translate(34.00,527.53) rotate(-90)" x="0" y="0" font-size="10.145" font-weight="normal" fill="#eeeeee" textLength="45.69" lengthAdjust="spacingAndGlyphs" stroke="#000" stroke-opacity="0.5" stroke-width="1.3">Controller</text>
<text transform="translate(34.00,527.53) rotate(-90)" x="0" y="0" font-size="10.145" font-weight="normal" fill="#eeeeee" textLength="45.69" lengthAdjust="spacingAndGlyphs" stroke="#eeeeee" stroke-width="0.15">Controller</text>
<text transform="translate(678.00,485.92) rotate(90)" x="0" y="0" font-size="9.710" font-weight="normal" fill="#eeeeee" textLength="37.60" lengthAdjust="spacingAndGlyphs" stroke="#000" stroke-opacity="0.5" stroke-width="1.3">Memory</text>
<text transform="translate(678.00,485.92) rotate(90)" x="0" y="0" font-size="9.710" font-weight="normal" fill="#eeeeee" textLength="37.60" lengthAdjust="spacingAndGlyphs" stroke="#eeeeee" stroke-width="0.15">Memory</text>
<text transform="translate(667.20,481.47) rotate(90)" x="0" y="0" font-size="10.290" font-weight="normal" fill="#eeeeee" textLength="45.94" lengthAdjust="spacingAndGlyphs" stroke="#000" stroke-opacity="0.5" stroke-width="1.3">Controller</text>
<text transform="translate(667.20,481.47) rotate(90)" x="0" y="0" font-size="10.290" font-weight="normal" fill="#eeeeee" textLength="45.94" lengthAdjust="spacingAndGlyphs" stroke="#eeeeee" stroke-width="0.15">Controller</text>
<text x="300.83" y="339.30" font-size="23.768" font-weight="normal" fill="#ffffff" textLength="100.13" lengthAdjust="spacingAndGlyphs" stroke="#ffffff" stroke-width="0.9">L2 Cache</text>
<text x="46.75" y="82.80" font-size="9.710" font-weight="normal" fill="#f2f2f2" textLength="19.69" lengthAdjust="spacingAndGlyphs" stroke="#000" stroke-opacity="0.55" stroke-width="1.3">GPC</text>
<text x="46.75" y="82.80" font-size="9.710" font-weight="normal" fill="#f2f2f2" textLength="19.69" lengthAdjust="spacingAndGlyphs" stroke="#f2f2f2" stroke-width="0.45">GPC</text>
<text x="111.39" y="97.90" font-size="9.275" font-weight="normal" fill="#f2f2f2" textLength="63.78" lengthAdjust="spacingAndGlyphs" stroke="#000" stroke-opacity="0.55" stroke-width="1.3">Raster Engine</text>
<text x="111.39" y="97.90" font-size="9.275" font-weight="normal" fill="#f2f2f2" textLength="63.78" lengthAdjust="spacingAndGlyphs" stroke="#f2f2f2" stroke-width="0.35">Raster Engine</text>
<text x="51.81" y="115.00" font-size="9.710" font-weight="normal" fill="#f2f2f2" textLength="18.56" lengthAdjust="spacingAndGlyphs" stroke="#000" stroke-opacity="0.55" stroke-width="1.3">TPC</text>
<text x="51.81" y="115.00" font-size="9.710" font-weight="normal" fill="#f2f2f2" textLength="18.56" lengthAdjust="spacingAndGlyphs" stroke="#f2f2f2" stroke-width="0.5">TPC</text>
<text x="55.22" y="131.80" font-size="9.420" font-weight="normal" fill="#f2f2f2" textLength="15.88" lengthAdjust="spacingAndGlyphs" stroke="#000" stroke-opacity="0.55" stroke-width="1.3">SM</text>
<text x="55.22" y="131.80" font-size="9.420" font-weight="normal" fill="#f2f2f2" textLength="15.88" lengthAdjust="spacingAndGlyphs" stroke="#f2f2f2" stroke-width="0.5">SM</text>
<text x="55.22" y="206.80" font-size="9.420" font-weight="normal" fill="#f2f2f2" textLength="15.88" lengthAdjust="spacingAndGlyphs" stroke="#000" stroke-opacity="0.55" stroke-width="1.3">SM</text>
<text x="55.22" y="206.80" font-size="9.420" font-weight="normal" fill="#f2f2f2" textLength="15.88" lengthAdjust="spacingAndGlyphs" stroke="#f2f2f2" stroke-width="0.5">SM</text>
<text x="90.81" y="115.00" font-size="9.710" font-weight="normal" fill="#f2f2f2" textLength="18.56" lengthAdjust="spacingAndGlyphs" stroke="#000" stroke-opacity="0.55" stroke-width="1.3">TPC</text>
<text x="90.81" y="115.00" font-size="9.710" font-weight="normal" fill="#f2f2f2" textLength="18.56" lengthAdjust="spacingAndGlyphs" stroke="#f2f2f2" stroke-width="0.5">TPC</text>
<text x="94.22" y="131.80" font-size="9.420" font-weight="normal" fill="#f2f2f2" textLength="15.88" lengthAdjust="spacingAndGlyphs" stroke="#000" stroke-opacity="0.55" stroke-width="1.3">SM</text>
<text x="94.22" y="131.80" font-size="9.420" font-weight="normal" fill="#f2f2f2" textLength="15.88" lengthAdjust="spacingAndGlyphs" stroke="#f2f2f2" stroke-width="0.5">SM</text>
<text x="94.22" y="206.80" font-size="9.420" font-weight="normal" fill="#f2f2f2" textLength="15.88" lengthAdjust="spacingAndGlyphs" stroke="#000" stroke-opacity="0.55" stroke-width="1.3">SM</text>
<text x="94.22" y="206.80" font-size="9.420" font-weight="normal" fill="#f2f2f2" textLength="15.88" lengthAdjust="spacingAndGlyphs" stroke="#f2f2f2" stroke-width="0.5">SM</text>
<text x="129.81" y="115.00" font-size="9.710" font-weight="normal" fill="#f2f2f2" textLength="18.56" lengthAdjust="spacingAndGlyphs" stroke="#000" stroke-opacity="0.55" stroke-width="1.3">TPC</text>
<text x="129.81" y="115.00" font-size="9.710" font-weight="normal" fill="#f2f2f2" textLength="18.56" lengthAdjust="spacingAndGlyphs" stroke="#f2f2f2" stroke-width="0.5">TPC</text>
<text x="133.22" y="131.80" font-size="9.420" font-weight="normal" fill="#f2f2f2" textLength="15.88" lengthAdjust="spacingAndGlyphs" stroke="#000" stroke-opacity="0.55" stroke-width="1.3">SM</text>
<text x="133.22" y="131.80" font-size="9.420" font-weight="normal" fill="#f2f2f2" textLength="15.88" lengthAdjust="spacingAndGlyphs" stroke="#f2f2f2" stroke-width="0.5">SM</text>
<text x="133.22" y="206.80" font-size="9.420" font-weight="normal" fill="#f2f2f2" textLength="15.88" lengthAdjust="spacingAndGlyphs" stroke="#000" stroke-opacity="0.55" stroke-width="1.3">SM</text>
<text x="133.22" y="206.80" font-size="9.420" font-weight="normal" fill="#f2f2f2" textLength="15.88" lengthAdjust="spacingAndGlyphs" stroke="#f2f2f2" stroke-width="0.5">SM</text>
<text x="168.81" y="115.00" font-size="9.710" font-weight="normal" fill="#f2f2f2" textLength="18.56" lengthAdjust="spacingAndGlyphs" stroke="#000" stroke-opacity="0.55" stroke-width="1.3">TPC</text>
<text x="168.81" y="115.00" font-size="9.710" font-weight="normal" fill="#f2f2f2" textLength="18.56" lengthAdjust="spacingAndGlyphs" stroke="#f2f2f2" stroke-width="0.5">TPC</text>
<text x="172.22" y="131.80" font-size="9.420" font-weight="normal" fill="#f2f2f2" textLength="15.88" lengthAdjust="spacingAndGlyphs" stroke="#000" stroke-opacity="0.55" stroke-width="1.3">SM</text>
<text x="172.22" y="131.80" font-size="9.420" font-weight="normal" fill="#f2f2f2" textLength="15.88" lengthAdjust="spacingAndGlyphs" stroke="#f2f2f2" stroke-width="0.5">SM</text>
<text x="172.22" y="206.80" font-size="9.420" font-weight="normal" fill="#f2f2f2" textLength="15.88" lengthAdjust="spacingAndGlyphs" stroke="#000" stroke-opacity="0.55" stroke-width="1.3">SM</text>
<text x="172.22" y="206.80" font-size="9.420" font-weight="normal" fill="#f2f2f2" textLength="15.88" lengthAdjust="spacingAndGlyphs" stroke="#f2f2f2" stroke-width="0.5">SM</text>
<text x="207.81" y="115.00" font-size="9.710" font-weight="normal" fill="#f2f2f2" textLength="18.56" lengthAdjust="spacingAndGlyphs" stroke="#000" stroke-opacity="0.55" stroke-width="1.3">TPC</text>
<text x="207.81" y="115.00" font-size="9.710" font-weight="normal" fill="#f2f2f2" textLength="18.56" lengthAdjust="spacingAndGlyphs" stroke="#f2f2f2" stroke-width="0.5">TPC</text>
<text x="211.22" y="131.80" font-size="9.420" font-weight="normal" fill="#f2f2f2" textLength="15.88" lengthAdjust="spacingAndGlyphs" stroke="#000" stroke-opacity="0.55" stroke-width="1.3">SM</text>
<text x="211.22" y="131.80" font-size="9.420" font-weight="normal" fill="#f2f2f2" textLength="15.88" lengthAdjust="spacingAndGlyphs" stroke="#f2f2f2" stroke-width="0.5">SM</text>
<text x="211.22" y="206.80" font-size="9.420" font-weight="normal" fill="#f2f2f2" textLength="15.88" lengthAdjust="spacingAndGlyphs" stroke="#000" stroke-opacity="0.55" stroke-width="1.3">SM</text>
<text x="211.22" y="206.80" font-size="9.420" font-weight="normal" fill="#f2f2f2" textLength="15.88" lengthAdjust="spacingAndGlyphs" stroke="#f2f2f2" stroke-width="0.5">SM</text>
<text x="252.75" y="82.80" font-size="9.710" font-weight="normal" fill="#f2f2f2" textLength="19.69" lengthAdjust="spacingAndGlyphs" stroke="#000" stroke-opacity="0.55" stroke-width="1.3">GPC</text>
<text x="252.75" y="82.80" font-size="9.710" font-weight="normal" fill="#f2f2f2" textLength="19.69" lengthAdjust="spacingAndGlyphs" stroke="#f2f2f2" stroke-width="0.45">GPC</text>
<text x="317.39" y="97.90" font-size="9.275" font-weight="normal" fill="#f2f2f2" textLength="63.78" lengthAdjust="spacingAndGlyphs" stroke="#000" stroke-opacity="0.55" stroke-width="1.3">Raster Engine</text>
<text x="317.39" y="97.90" font-size="9.275" font-weight="normal" fill="#f2f2f2" textLength="63.78" lengthAdjust="spacingAndGlyphs" stroke="#f2f2f2" stroke-width="0.35">Raster Engine</text>
<text x="257.81" y="115.00" font-size="9.710" font-weight="normal" fill="#f2f2f2" textLength="18.56" lengthAdjust="spacingAndGlyphs" stroke="#000" stroke-opacity="0.55" stroke-width="1.3">TPC</text>
<text x="257.81" y="115.00" font-size="9.710" font-weight="normal" fill="#f2f2f2" textLength="18.56" lengthAdjust="spacingAndGlyphs" stroke="#f2f2f2" stroke-width="0.5">TPC</text>
<text x="261.22" y="131.80" font-size="9.420" font-weight="normal" fill="#f2f2f2" textLength="15.88" lengthAdjust="spacingAndGlyphs" stroke="#000" stroke-opacity="0.55" stroke-width="1.3">SM</text>
<text x="261.22" y="131.80" font-size="9.420" font-weight="normal" fill="#f2f2f2" textLength="15.88" lengthAdjust="spacingAndGlyphs" stroke="#f2f2f2" stroke-width="0.5">SM</text>
<text x="261.22" y="206.80" font-size="9.420" font-weight="normal" fill="#f2f2f2" textLength="15.88" lengthAdjust="spacingAndGlyphs" stroke="#000" stroke-opacity="0.55" stroke-width="1.3">SM</text>
<text x="261.22" y="206.80" font-size="9.420" font-weight="normal" fill="#f2f2f2" textLength="15.88" lengthAdjust="spacingAndGlyphs" stroke="#f2f2f2" stroke-width="0.5">SM</text>
<text x="296.81" y="115.00" font-size="9.710" font-weight="normal" fill="#f2f2f2" textLength="18.56" lengthAdjust="spacingAndGlyphs" stroke="#000" stroke-opacity="0.55" stroke-width="1.3">TPC</text>
<text x="296.81" y="115.00" font-size="9.710" font-weight="normal" fill="#f2f2f2" textLength="18.56" lengthAdjust="spacingAndGlyphs" stroke="#f2f2f2" stroke-width="0.5">TPC</text>
<text x="300.22" y="131.80" font-size="9.420" font-weight="normal" fill="#f2f2f2" textLength="15.88" lengthAdjust="spacingAndGlyphs" stroke="#000" stroke-opacity="0.55" stroke-width="1.3">SM</text>
<text x="300.22" y="131.80" font-size="9.420" font-weight="normal" fill="#f2f2f2" textLength="15.88" lengthAdjust="spacingAndGlyphs" stroke="#f2f2f2" stroke-width="0.5">SM</text>
<text x="300.22" y="206.80" font-size="9.420" font-weight="normal" fill="#f2f2f2" textLength="15.88" lengthAdjust="spacingAndGlyphs" stroke="#000" stroke-opacity="0.55" stroke-width="1.3">SM</text>
<text x="300.22" y="206.80" font-size="9.420" font-weight="normal" fill="#f2f2f2" textLength="15.88" lengthAdjust="spacingAndGlyphs" stroke="#f2f2f2" stroke-width="0.5">SM</text>
<text x="335.81" y="115.00" font-size="9.710" font-weight="normal" fill="#f2f2f2" textLength="18.56" lengthAdjust="spacingAndGlyphs" stroke="#000" stroke-opacity="0.55" stroke-width="1.3">TPC</text>
<text x="335.81" y="115.00" font-size="9.710" font-weight="normal" fill="#f2f2f2" textLength="18.56" lengthAdjust="spacingAndGlyphs" stroke="#f2f2f2" stroke-width="0.5">TPC</text>
<text x="339.22" y="131.80" font-size="9.420" font-weight="normal" fill="#f2f2f2" textLength="15.88" lengthAdjust="spacingAndGlyphs" stroke="#000" stroke-opacity="0.55" stroke-width="1.3">SM</text>
<text x="339.22" y="131.80" font-size="9.420" font-weight="normal" fill="#f2f2f2" textLength="15.88" lengthAdjust="spacingAndGlyphs" stroke="#f2f2f2" stroke-width="0.5">SM</text>
<text x="339.22" y="206.80" font-size="9.420" font-weight="normal" fill="#f2f2f2" textLength="15.88" lengthAdjust="spacingAndGlyphs" stroke="#000" stroke-opacity="0.55" stroke-width="1.3">SM</text>
<text x="339.22" y="206.80" font-size="9.420" font-weight="normal" fill="#f2f2f2" textLength="15.88" lengthAdjust="spacingAndGlyphs" stroke="#f2f2f2" stroke-width="0.5">SM</text>
<text x="374.81" y="115.00" font-size="9.710" font-weight="normal" fill="#f2f2f2" textLength="18.56" lengthAdjust="spacingAndGlyphs" stroke="#000" stroke-opacity="0.55" stroke-width="1.3">TPC</text>
<text x="374.81" y="115.00" font-size="9.710" font-weight="normal" fill="#f2f2f2" textLength="18.56" lengthAdjust="spacingAndGlyphs" stroke="#f2f2f2" stroke-width="0.5">TPC</text>
<text x="378.22" y="131.80" font-size="9.420" font-weight="normal" fill="#f2f2f2" textLength="15.88" lengthAdjust="spacingAndGlyphs" stroke="#000" stroke-opacity="0.55" stroke-width="1.3">SM</text>
<text x="378.22" y="131.80" font-size="9.420" font-weight="normal" fill="#f2f2f2" textLength="15.88" lengthAdjust="spacingAndGlyphs" stroke="#f2f2f2" stroke-width="0.5">SM</text>
<text x="378.22" y="206.80" font-size="9.420" font-weight="normal" fill="#f2f2f2" textLength="15.88" lengthAdjust="spacingAndGlyphs" stroke="#000" stroke-opacity="0.55" stroke-width="1.3">SM</text>
<text x="378.22" y="206.80" font-size="9.420" font-weight="normal" fill="#f2f2f2" textLength="15.88" lengthAdjust="spacingAndGlyphs" stroke="#f2f2f2" stroke-width="0.5">SM</text>
<text x="413.81" y="115.00" font-size="9.710" font-weight="normal" fill="#f2f2f2" textLength="18.56" lengthAdjust="spacingAndGlyphs" stroke="#000" stroke-opacity="0.55" stroke-width="1.3">TPC</text>
<text x="413.81" y="115.00" font-size="9.710" font-weight="normal" fill="#f2f2f2" textLength="18.56" lengthAdjust="spacingAndGlyphs" stroke="#f2f2f2" stroke-width="0.5">TPC</text>
<text x="417.22" y="131.80" font-size="9.420" font-weight="normal" fill="#f2f2f2" textLength="15.88" lengthAdjust="spacingAndGlyphs" stroke="#000" stroke-opacity="0.55" stroke-width="1.3">SM</text>
<text x="417.22" y="131.80" font-size="9.420" font-weight="normal" fill="#f2f2f2" textLength="15.88" lengthAdjust="spacingAndGlyphs" stroke="#f2f2f2" stroke-width="0.5">SM</text>
<text x="417.22" y="206.80" font-size="9.420" font-weight="normal" fill="#f2f2f2" textLength="15.88" lengthAdjust="spacingAndGlyphs" stroke="#000" stroke-opacity="0.55" stroke-width="1.3">SM</text>
<text x="417.22" y="206.80" font-size="9.420" font-weight="normal" fill="#f2f2f2" textLength="15.88" lengthAdjust="spacingAndGlyphs" stroke="#f2f2f2" stroke-width="0.5">SM</text>
<text x="457.75" y="82.80" font-size="9.710" font-weight="normal" fill="#f2f2f2" textLength="19.69" lengthAdjust="spacingAndGlyphs" stroke="#000" stroke-opacity="0.55" stroke-width="1.3">GPC</text>
<text x="457.75" y="82.80" font-size="9.710" font-weight="normal" fill="#f2f2f2" textLength="19.69" lengthAdjust="spacingAndGlyphs" stroke="#f2f2f2" stroke-width="0.45">GPC</text>
<text x="522.39" y="97.90" font-size="9.275" font-weight="normal" fill="#f2f2f2" textLength="63.78" lengthAdjust="spacingAndGlyphs" stroke="#000" stroke-opacity="0.55" stroke-width="1.3">Raster Engine</text>
<text x="522.39" y="97.90" font-size="9.275" font-weight="normal" fill="#f2f2f2" textLength="63.78" lengthAdjust="spacingAndGlyphs" stroke="#f2f2f2" stroke-width="0.35">Raster Engine</text>
<text x="462.81" y="115.00" font-size="9.710" font-weight="normal" fill="#f2f2f2" textLength="18.56" lengthAdjust="spacingAndGlyphs" stroke="#000" stroke-opacity="0.55" stroke-width="1.3">TPC</text>
<text x="462.81" y="115.00" font-size="9.710" font-weight="normal" fill="#f2f2f2" textLength="18.56" lengthAdjust="spacingAndGlyphs" stroke="#f2f2f2" stroke-width="0.5">TPC</text>
<text x="466.22" y="131.80" font-size="9.420" font-weight="normal" fill="#f2f2f2" textLength="15.88" lengthAdjust="spacingAndGlyphs" stroke="#000" stroke-opacity="0.55" stroke-width="1.3">SM</text>
<text x="466.22" y="131.80" font-size="9.420" font-weight="normal" fill="#f2f2f2" textLength="15.88" lengthAdjust="spacingAndGlyphs" stroke="#f2f2f2" stroke-width="0.5">SM</text>
<text x="466.22" y="206.80" font-size="9.420" font-weight="normal" fill="#f2f2f2" textLength="15.88" lengthAdjust="spacingAndGlyphs" stroke="#000" stroke-opacity="0.55" stroke-width="1.3">SM</text>
<text x="466.22" y="206.80" font-size="9.420" font-weight="normal" fill="#f2f2f2" textLength="15.88" lengthAdjust="spacingAndGlyphs" stroke="#f2f2f2" stroke-width="0.5">SM</text>
<text x="501.81" y="115.00" font-size="9.710" font-weight="normal" fill="#f2f2f2" textLength="18.56" lengthAdjust="spacingAndGlyphs" stroke="#000" stroke-opacity="0.55" stroke-width="1.3">TPC</text>
<text x="501.81" y="115.00" font-size="9.710" font-weight="normal" fill="#f2f2f2" textLength="18.56" lengthAdjust="spacingAndGlyphs" stroke="#f2f2f2" stroke-width="0.5">TPC</text>
<text x="505.22" y="131.80" font-size="9.420" font-weight="normal" fill="#f2f2f2" textLength="15.88" lengthAdjust="spacingAndGlyphs" stroke="#000" stroke-opacity="0.55" stroke-width="1.3">SM</text>
<text x="505.22" y="131.80" font-size="9.420" font-weight="normal" fill="#f2f2f2" textLength="15.88" lengthAdjust="spacingAndGlyphs" stroke="#f2f2f2" stroke-width="0.5">SM</text>
<text x="505.22" y="206.80" font-size="9.420" font-weight="normal" fill="#f2f2f2" textLength="15.88" lengthAdjust="spacingAndGlyphs" stroke="#000" stroke-opacity="0.55" stroke-width="1.3">SM</text>
<text x="505.22" y="206.80" font-size="9.420" font-weight="normal" fill="#f2f2f2" textLength="15.88" lengthAdjust="spacingAndGlyphs" stroke="#f2f2f2" stroke-width="0.5">SM</text>
<text x="540.81" y="115.00" font-size="9.710" font-weight="normal" fill="#f2f2f2" textLength="18.56" lengthAdjust="spacingAndGlyphs" stroke="#000" stroke-opacity="0.55" stroke-width="1.3">TPC</text>
<text x="540.81" y="115.00" font-size="9.710" font-weight="normal" fill="#f2f2f2" textLength="18.56" lengthAdjust="spacingAndGlyphs" stroke="#f2f2f2" stroke-width="0.5">TPC</text>
<text x="544.22" y="131.80" font-size="9.420" font-weight="normal" fill="#f2f2f2" textLength="15.88" lengthAdjust="spacingAndGlyphs" stroke="#000" stroke-opacity="0.55" stroke-width="1.3">SM</text>
<text x="544.22" y="131.80" font-size="9.420" font-weight="normal" fill="#f2f2f2" textLength="15.88" lengthAdjust="spacingAndGlyphs" stroke="#f2f2f2" stroke-width="0.5">SM</text>
<text x="544.22" y="206.80" font-size="9.420" font-weight="normal" fill="#f2f2f2" textLength="15.88" lengthAdjust="spacingAndGlyphs" stroke="#000" stroke-opacity="0.55" stroke-width="1.3">SM</text>
<text x="544.22" y="206.80" font-size="9.420" font-weight="normal" fill="#f2f2f2" textLength="15.88" lengthAdjust="spacingAndGlyphs" stroke="#f2f2f2" stroke-width="0.5">SM</text>
<text x="579.81" y="115.00" font-size="9.710" font-weight="normal" fill="#f2f2f2" textLength="18.56" lengthAdjust="spacingAndGlyphs" stroke="#000" stroke-opacity="0.55" stroke-width="1.3">TPC</text>
<text x="579.81" y="115.00" font-size="9.710" font-weight="normal" fill="#f2f2f2" textLength="18.56" lengthAdjust="spacingAndGlyphs" stroke="#f2f2f2" stroke-width="0.5">TPC</text>
<text x="583.22" y="131.80" font-size="9.420" font-weight="normal" fill="#f2f2f2" textLength="15.88" lengthAdjust="spacingAndGlyphs" stroke="#000" stroke-opacity="0.55" stroke-width="1.3">SM</text>
<text x="583.22" y="131.80" font-size="9.420" font-weight="normal" fill="#f2f2f2" textLength="15.88" lengthAdjust="spacingAndGlyphs" stroke="#f2f2f2" stroke-width="0.5">SM</text>
<text x="583.22" y="206.80" font-size="9.420" font-weight="normal" fill="#f2f2f2" textLength="15.88" lengthAdjust="spacingAndGlyphs" stroke="#000" stroke-opacity="0.55" stroke-width="1.3">SM</text>
<text x="583.22" y="206.80" font-size="9.420" font-weight="normal" fill="#f2f2f2" textLength="15.88" lengthAdjust="spacingAndGlyphs" stroke="#f2f2f2" stroke-width="0.5">SM</text>
<text x="618.81" y="115.00" font-size="9.710" font-weight="normal" fill="#f2f2f2" textLength="18.56" lengthAdjust="spacingAndGlyphs" stroke="#000" stroke-opacity="0.55" stroke-width="1.3">TPC</text>
<text x="618.81" y="115.00" font-size="9.710" font-weight="normal" fill="#f2f2f2" textLength="18.56" lengthAdjust="spacingAndGlyphs" stroke="#f2f2f2" stroke-width="0.5">TPC</text>
<text x="622.22" y="131.80" font-size="9.420" font-weight="normal" fill="#f2f2f2" textLength="15.88" lengthAdjust="spacingAndGlyphs" stroke="#000" stroke-opacity="0.55" stroke-width="1.3">SM</text>
<text x="622.22" y="131.80" font-size="9.420" font-weight="normal" fill="#f2f2f2" textLength="15.88" lengthAdjust="spacingAndGlyphs" stroke="#f2f2f2" stroke-width="0.5">SM</text>
<text x="622.22" y="206.80" font-size="9.420" font-weight="normal" fill="#f2f2f2" textLength="15.88" lengthAdjust="spacingAndGlyphs" stroke="#000" stroke-opacity="0.55" stroke-width="1.3">SM</text>
<text x="622.22" y="206.80" font-size="9.420" font-weight="normal" fill="#f2f2f2" textLength="15.88" lengthAdjust="spacingAndGlyphs" stroke="#f2f2f2" stroke-width="0.5">SM</text>
<text x="156.29" y="464.00" font-size="9.275" font-weight="normal" fill="#f2f2f2" textLength="15.44" lengthAdjust="spacingAndGlyphs" stroke="#000" stroke-opacity="0.55" stroke-width="1.3">SM</text>
<text x="156.29" y="464.00" font-size="9.275" font-weight="normal" fill="#f2f2f2" textLength="15.44" lengthAdjust="spacingAndGlyphs" stroke="#f2f2f2" stroke-width="0.5">SM</text>
<text x="156.29" y="539.00" font-size="9.275" font-weight="normal" fill="#f2f2f2" textLength="15.44" lengthAdjust="spacingAndGlyphs" stroke="#000" stroke-opacity="0.55" stroke-width="1.3">SM</text>
<text x="156.29" y="539.00" font-size="9.275" font-weight="normal" fill="#f2f2f2" textLength="15.44" lengthAdjust="spacingAndGlyphs" stroke="#f2f2f2" stroke-width="0.5">SM</text>
<text x="152.52" y="556.20" font-size="9.420" font-weight="normal" fill="#f2f2f2" textLength="17.84" lengthAdjust="spacingAndGlyphs" stroke="#000" stroke-opacity="0.55" stroke-width="1.3">TPC</text>
<text x="152.52" y="556.20" font-size="9.420" font-weight="normal" fill="#f2f2f2" textLength="17.84" lengthAdjust="spacingAndGlyphs" stroke="#f2f2f2" stroke-width="0.5">TPC</text>
<text x="195.29" y="464.00" font-size="9.275" font-weight="normal" fill="#f2f2f2" textLength="15.44" lengthAdjust="spacingAndGlyphs" stroke="#000" stroke-opacity="0.55" stroke-width="1.3">SM</text>
<text x="195.29" y="464.00" font-size="9.275" font-weight="normal" fill="#f2f2f2" textLength="15.44" lengthAdjust="spacingAndGlyphs" stroke="#f2f2f2" stroke-width="0.5">SM</text>
<text x="195.29" y="539.00" font-size="9.275" font-weight="normal" fill="#f2f2f2" textLength="15.44" lengthAdjust="spacingAndGlyphs" stroke="#000" stroke-opacity="0.55" stroke-width="1.3">SM</text>
<text x="195.29" y="539.00" font-size="9.275" font-weight="normal" fill="#f2f2f2" textLength="15.44" lengthAdjust="spacingAndGlyphs" stroke="#f2f2f2" stroke-width="0.5">SM</text>
<text x="191.52" y="556.20" font-size="9.420" font-weight="normal" fill="#f2f2f2" textLength="17.84" lengthAdjust="spacingAndGlyphs" stroke="#000" stroke-opacity="0.55" stroke-width="1.3">TPC</text>
<text x="191.52" y="556.20" font-size="9.420" font-weight="normal" fill="#f2f2f2" textLength="17.84" lengthAdjust="spacingAndGlyphs" stroke="#f2f2f2" stroke-width="0.5">TPC</text>
<text x="234.29" y="464.00" font-size="9.275" font-weight="normal" fill="#f2f2f2" textLength="15.44" lengthAdjust="spacingAndGlyphs" stroke="#000" stroke-opacity="0.55" stroke-width="1.3">SM</text>
<text x="234.29" y="464.00" font-size="9.275" font-weight="normal" fill="#f2f2f2" textLength="15.44" lengthAdjust="spacingAndGlyphs" stroke="#f2f2f2" stroke-width="0.5">SM</text>
<text x="234.29" y="539.00" font-size="9.275" font-weight="normal" fill="#f2f2f2" textLength="15.44" lengthAdjust="spacingAndGlyphs" stroke="#000" stroke-opacity="0.55" stroke-width="1.3">SM</text>
<text x="234.29" y="539.00" font-size="9.275" font-weight="normal" fill="#f2f2f2" textLength="15.44" lengthAdjust="spacingAndGlyphs" stroke="#f2f2f2" stroke-width="0.5">SM</text>
<text x="230.52" y="556.20" font-size="9.420" font-weight="normal" fill="#f2f2f2" textLength="17.84" lengthAdjust="spacingAndGlyphs" stroke="#000" stroke-opacity="0.55" stroke-width="1.3">TPC</text>
<text x="230.52" y="556.20" font-size="9.420" font-weight="normal" fill="#f2f2f2" textLength="17.84" lengthAdjust="spacingAndGlyphs" stroke="#f2f2f2" stroke-width="0.5">TPC</text>
<text x="273.29" y="464.00" font-size="9.275" font-weight="normal" fill="#f2f2f2" textLength="15.44" lengthAdjust="spacingAndGlyphs" stroke="#000" stroke-opacity="0.55" stroke-width="1.3">SM</text>
<text x="273.29" y="464.00" font-size="9.275" font-weight="normal" fill="#f2f2f2" textLength="15.44" lengthAdjust="spacingAndGlyphs" stroke="#f2f2f2" stroke-width="0.5">SM</text>
<text x="273.29" y="539.00" font-size="9.275" font-weight="normal" fill="#f2f2f2" textLength="15.44" lengthAdjust="spacingAndGlyphs" stroke="#000" stroke-opacity="0.55" stroke-width="1.3">SM</text>
<text x="273.29" y="539.00" font-size="9.275" font-weight="normal" fill="#f2f2f2" textLength="15.44" lengthAdjust="spacingAndGlyphs" stroke="#f2f2f2" stroke-width="0.5">SM</text>
<text x="269.52" y="556.20" font-size="9.420" font-weight="normal" fill="#f2f2f2" textLength="17.84" lengthAdjust="spacingAndGlyphs" stroke="#000" stroke-opacity="0.55" stroke-width="1.3">TPC</text>
<text x="269.52" y="556.20" font-size="9.420" font-weight="normal" fill="#f2f2f2" textLength="17.84" lengthAdjust="spacingAndGlyphs" stroke="#f2f2f2" stroke-width="0.5">TPC</text>
<text x="312.29" y="464.00" font-size="9.275" font-weight="normal" fill="#f2f2f2" textLength="15.44" lengthAdjust="spacingAndGlyphs" stroke="#000" stroke-opacity="0.55" stroke-width="1.3">SM</text>
<text x="312.29" y="464.00" font-size="9.275" font-weight="normal" fill="#f2f2f2" textLength="15.44" lengthAdjust="spacingAndGlyphs" stroke="#f2f2f2" stroke-width="0.5">SM</text>
<text x="312.29" y="539.00" font-size="9.275" font-weight="normal" fill="#f2f2f2" textLength="15.44" lengthAdjust="spacingAndGlyphs" stroke="#000" stroke-opacity="0.55" stroke-width="1.3">SM</text>
<text x="312.29" y="539.00" font-size="9.275" font-weight="normal" fill="#f2f2f2" textLength="15.44" lengthAdjust="spacingAndGlyphs" stroke="#f2f2f2" stroke-width="0.5">SM</text>
<text x="308.52" y="556.20" font-size="9.420" font-weight="normal" fill="#f2f2f2" textLength="17.84" lengthAdjust="spacingAndGlyphs" stroke="#000" stroke-opacity="0.55" stroke-width="1.3">TPC</text>
<text x="308.52" y="556.20" font-size="9.420" font-weight="normal" fill="#f2f2f2" textLength="17.84" lengthAdjust="spacingAndGlyphs" stroke="#f2f2f2" stroke-width="0.5">TPC</text>
<text x="211.80" y="572.20" font-size="8.986" font-weight="normal" fill="#f2f2f2" textLength="63.68" lengthAdjust="spacingAndGlyphs" stroke="#000" stroke-opacity="0.55" stroke-width="1.3">Raster Engine</text>
<text x="211.80" y="572.20" font-size="8.986" font-weight="normal" fill="#f2f2f2" textLength="63.68" lengthAdjust="spacingAndGlyphs" stroke="#f2f2f2" stroke-width="0.35">Raster Engine</text>
<text x="147.34" y="586.20" font-size="9.420" font-weight="normal" fill="#f2f2f2" textLength="19.74" lengthAdjust="spacingAndGlyphs" stroke="#000" stroke-opacity="0.55" stroke-width="1.3">GPC</text>
<text x="147.34" y="586.20" font-size="9.420" font-weight="normal" fill="#f2f2f2" textLength="19.74" lengthAdjust="spacingAndGlyphs" stroke="#f2f2f2" stroke-width="0.45">GPC</text>
<text x="362.29" y="464.00" font-size="9.275" font-weight="normal" fill="#f2f2f2" textLength="15.44" lengthAdjust="spacingAndGlyphs" stroke="#000" stroke-opacity="0.55" stroke-width="1.3">SM</text>
<text x="362.29" y="464.00" font-size="9.275" font-weight="normal" fill="#f2f2f2" textLength="15.44" lengthAdjust="spacingAndGlyphs" stroke="#f2f2f2" stroke-width="0.5">SM</text>
<text x="362.29" y="539.00" font-size="9.275" font-weight="normal" fill="#f2f2f2" textLength="15.44" lengthAdjust="spacingAndGlyphs" stroke="#000" stroke-opacity="0.55" stroke-width="1.3">SM</text>
<text x="362.29" y="539.00" font-size="9.275" font-weight="normal" fill="#f2f2f2" textLength="15.44" lengthAdjust="spacingAndGlyphs" stroke="#f2f2f2" stroke-width="0.5">SM</text>
<text x="358.52" y="556.20" font-size="9.420" font-weight="normal" fill="#f2f2f2" textLength="17.84" lengthAdjust="spacingAndGlyphs" stroke="#000" stroke-opacity="0.55" stroke-width="1.3">TPC</text>
<text x="358.52" y="556.20" font-size="9.420" font-weight="normal" fill="#f2f2f2" textLength="17.84" lengthAdjust="spacingAndGlyphs" stroke="#f2f2f2" stroke-width="0.5">TPC</text>
<text x="401.29" y="464.00" font-size="9.275" font-weight="normal" fill="#f2f2f2" textLength="15.44" lengthAdjust="spacingAndGlyphs" stroke="#000" stroke-opacity="0.55" stroke-width="1.3">SM</text>
<text x="401.29" y="464.00" font-size="9.275" font-weight="normal" fill="#f2f2f2" textLength="15.44" lengthAdjust="spacingAndGlyphs" stroke="#f2f2f2" stroke-width="0.5">SM</text>
<text x="401.29" y="539.00" font-size="9.275" font-weight="normal" fill="#f2f2f2" textLength="15.44" lengthAdjust="spacingAndGlyphs" stroke="#000" stroke-opacity="0.55" stroke-width="1.3">SM</text>
<text x="401.29" y="539.00" font-size="9.275" font-weight="normal" fill="#f2f2f2" textLength="15.44" lengthAdjust="spacingAndGlyphs" stroke="#f2f2f2" stroke-width="0.5">SM</text>
<text x="397.52" y="556.20" font-size="9.420" font-weight="normal" fill="#f2f2f2" textLength="17.84" lengthAdjust="spacingAndGlyphs" stroke="#000" stroke-opacity="0.55" stroke-width="1.3">TPC</text>
<text x="397.52" y="556.20" font-size="9.420" font-weight="normal" fill="#f2f2f2" textLength="17.84" lengthAdjust="spacingAndGlyphs" stroke="#f2f2f2" stroke-width="0.5">TPC</text>
<text x="440.29" y="464.00" font-size="9.275" font-weight="normal" fill="#f2f2f2" textLength="15.44" lengthAdjust="spacingAndGlyphs" stroke="#000" stroke-opacity="0.55" stroke-width="1.3">SM</text>
<text x="440.29" y="464.00" font-size="9.275" font-weight="normal" fill="#f2f2f2" textLength="15.44" lengthAdjust="spacingAndGlyphs" stroke="#f2f2f2" stroke-width="0.5">SM</text>
<text x="440.29" y="539.00" font-size="9.275" font-weight="normal" fill="#f2f2f2" textLength="15.44" lengthAdjust="spacingAndGlyphs" stroke="#000" stroke-opacity="0.55" stroke-width="1.3">SM</text>
<text x="440.29" y="539.00" font-size="9.275" font-weight="normal" fill="#f2f2f2" textLength="15.44" lengthAdjust="spacingAndGlyphs" stroke="#f2f2f2" stroke-width="0.5">SM</text>
<text x="436.52" y="556.20" font-size="9.420" font-weight="normal" fill="#f2f2f2" textLength="17.84" lengthAdjust="spacingAndGlyphs" stroke="#000" stroke-opacity="0.55" stroke-width="1.3">TPC</text>
<text x="436.52" y="556.20" font-size="9.420" font-weight="normal" fill="#f2f2f2" textLength="17.84" lengthAdjust="spacingAndGlyphs" stroke="#f2f2f2" stroke-width="0.5">TPC</text>
<text x="479.29" y="464.00" font-size="9.275" font-weight="normal" fill="#f2f2f2" textLength="15.44" lengthAdjust="spacingAndGlyphs" stroke="#000" stroke-opacity="0.55" stroke-width="1.3">SM</text>
<text x="479.29" y="464.00" font-size="9.275" font-weight="normal" fill="#f2f2f2" textLength="15.44" lengthAdjust="spacingAndGlyphs" stroke="#f2f2f2" stroke-width="0.5">SM</text>
<text x="479.29" y="539.00" font-size="9.275" font-weight="normal" fill="#f2f2f2" textLength="15.44" lengthAdjust="spacingAndGlyphs" stroke="#000" stroke-opacity="0.55" stroke-width="1.3">SM</text>
<text x="479.29" y="539.00" font-size="9.275" font-weight="normal" fill="#f2f2f2" textLength="15.44" lengthAdjust="spacingAndGlyphs" stroke="#f2f2f2" stroke-width="0.5">SM</text>
<text x="475.52" y="556.20" font-size="9.420" font-weight="normal" fill="#f2f2f2" textLength="17.84" lengthAdjust="spacingAndGlyphs" stroke="#000" stroke-opacity="0.55" stroke-width="1.3">TPC</text>
<text x="475.52" y="556.20" font-size="9.420" font-weight="normal" fill="#f2f2f2" textLength="17.84" lengthAdjust="spacingAndGlyphs" stroke="#f2f2f2" stroke-width="0.5">TPC</text>
<text x="518.29" y="464.00" font-size="9.275" font-weight="normal" fill="#565656" textLength="15.44" lengthAdjust="spacingAndGlyphs" stroke="#565656" stroke-width="0.5">SM</text>
<text x="518.29" y="539.00" font-size="9.275" font-weight="normal" fill="#565656" textLength="15.44" lengthAdjust="spacingAndGlyphs" stroke="#565656" stroke-width="0.5">SM</text>
<text x="514.52" y="556.20" font-size="9.420" font-weight="normal" fill="#565656" textLength="17.84" lengthAdjust="spacingAndGlyphs" stroke="#565656" stroke-width="0.5">TPC</text>
<text x="417.80" y="572.20" font-size="8.986" font-weight="normal" fill="#f2f2f2" textLength="63.68" lengthAdjust="spacingAndGlyphs" stroke="#000" stroke-opacity="0.55" stroke-width="1.3">Raster Engine</text>
<text x="417.80" y="572.20" font-size="8.986" font-weight="normal" fill="#f2f2f2" textLength="63.68" lengthAdjust="spacingAndGlyphs" stroke="#f2f2f2" stroke-width="0.35">Raster Engine</text>
<text x="353.34" y="586.20" font-size="9.420" font-weight="normal" fill="#f2f2f2" textLength="19.74" lengthAdjust="spacingAndGlyphs" stroke="#000" stroke-opacity="0.55" stroke-width="1.3">GPC</text>
<text x="353.34" y="586.20" font-size="9.420" font-weight="normal" fill="#f2f2f2" textLength="19.74" lengthAdjust="spacingAndGlyphs" stroke="#f2f2f2" stroke-width="0.45">GPC</text>
</svg>
</body></html>
